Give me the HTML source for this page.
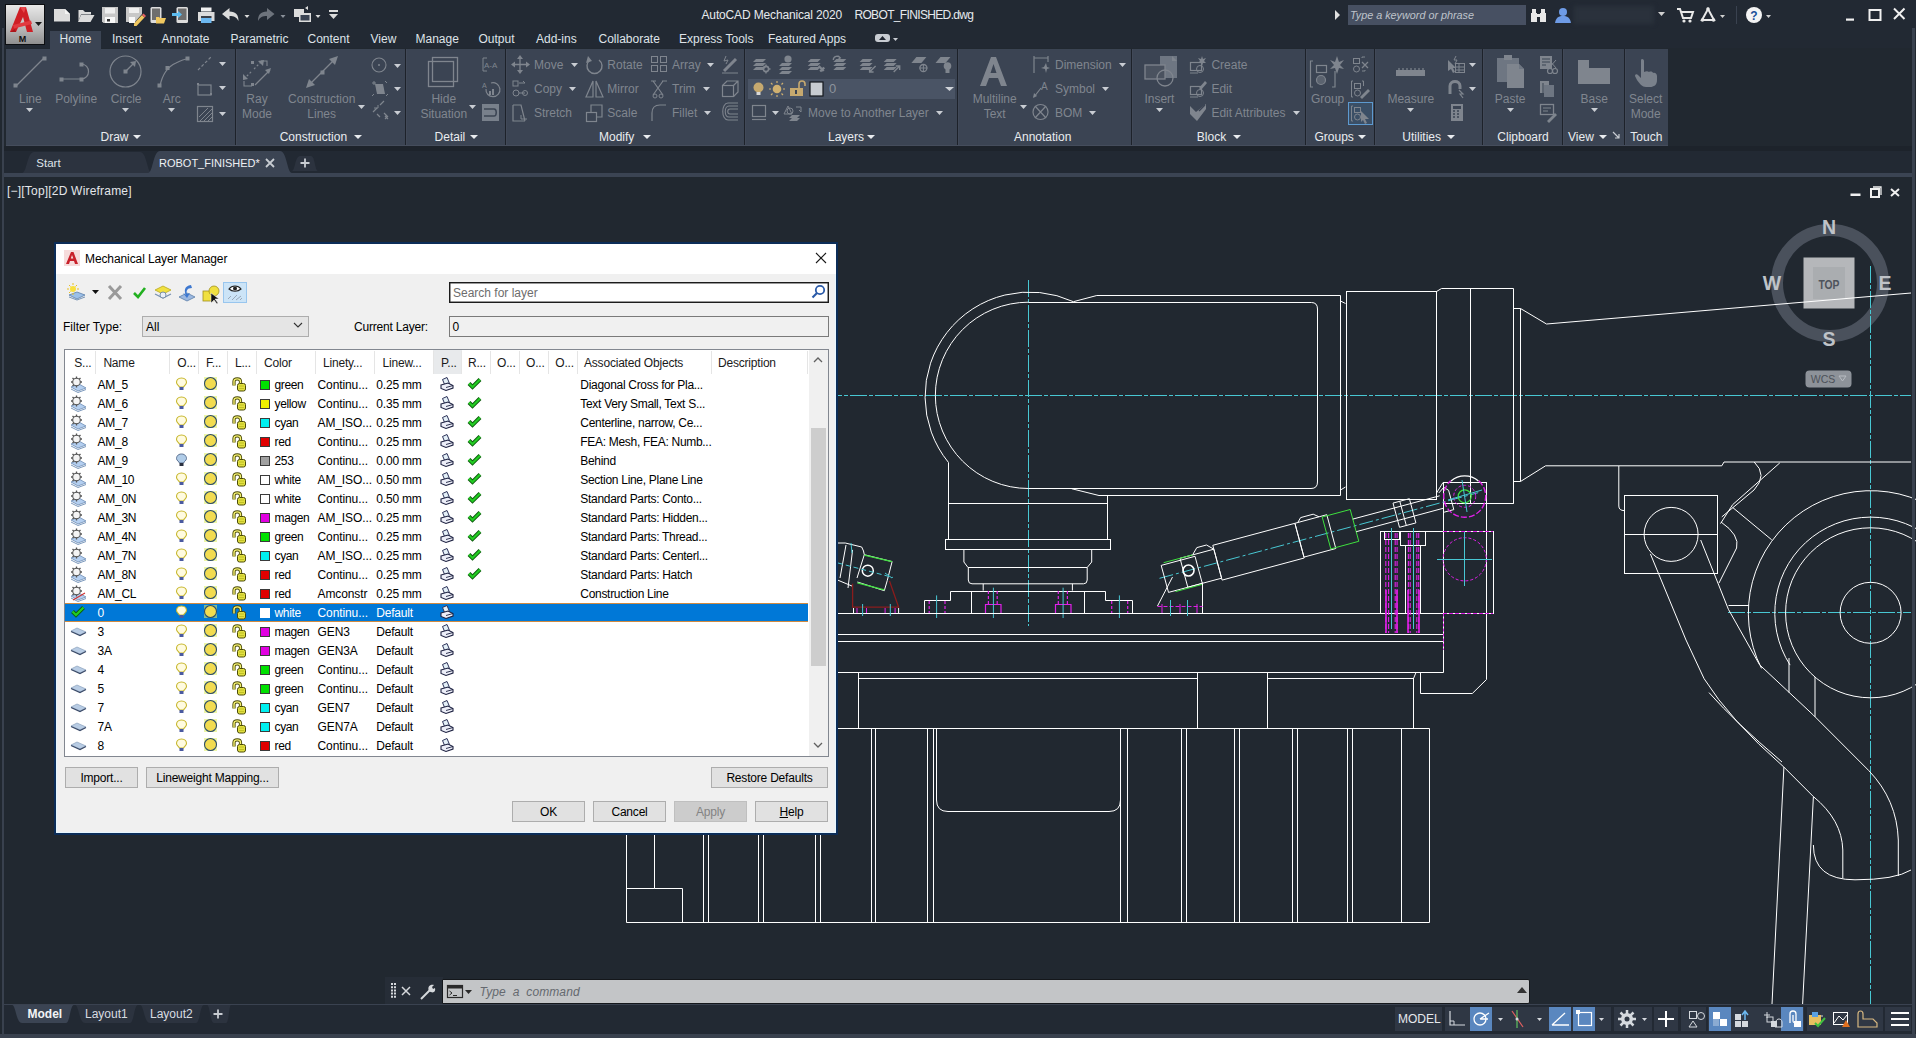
<!DOCTYPE html><html><head><meta charset="utf-8"><title>AutoCAD Mechanical 2020</title><style>
*{box-sizing:border-box;margin:0;padding:0}
html,body{width:1916px;height:1038px;overflow:hidden;background:#212830;font-family:"Liberation Sans",sans-serif;font-size:12px;color:#fff}
.a{position:absolute}
.t{position:absolute;white-space:pre;line-height:12px;height:12px}
.gl{color:#80868f}
.pl{color:#e9ecef}
.tab{color:#dfe3e8}
svg{position:absolute;overflow:visible}
.btn{position:absolute;background:#e1e1e1;border:1px solid #adadad;color:#000;text-align:center;font-size:12px;line-height:19px;padding-top:1px}
.cell{position:absolute;line-height:12px;white-space:pre;color:#000;font-size:12px}
</style></head><body>
<div class="a" style="left:0px;top:0px;width:1916px;height:48px;background:#222933;"></div>
<div class="a" style="left:2px;top:28px;width:2px;height:1010px;background:#39414e;"></div>
<div class="a" style="left:1912px;top:28px;width:3px;height:1010px;background:#39414e;"></div>
<div class="a" style="left:6px;top:49px;width:1662px;height:97px;background:#3b4453;"></div>
<div class="a" style="left:235px;top:49px;width:1px;height:97px;background:#1d222a;"></div>
<div class="a" style="left:236px;top:49px;width:1px;height:97px;background:#414958;"></div>
<div class="a" style="left:405px;top:49px;width:1px;height:97px;background:#1d222a;"></div>
<div class="a" style="left:406px;top:49px;width:1px;height:97px;background:#414958;"></div>
<div class="a" style="left:505px;top:49px;width:1px;height:97px;background:#1d222a;"></div>
<div class="a" style="left:506px;top:49px;width:1px;height:97px;background:#414958;"></div>
<div class="a" style="left:744px;top:49px;width:1px;height:97px;background:#1d222a;"></div>
<div class="a" style="left:745px;top:49px;width:1px;height:97px;background:#414958;"></div>
<div class="a" style="left:957px;top:49px;width:1px;height:97px;background:#1d222a;"></div>
<div class="a" style="left:958px;top:49px;width:1px;height:97px;background:#414958;"></div>
<div class="a" style="left:1131px;top:49px;width:1px;height:97px;background:#1d222a;"></div>
<div class="a" style="left:1132px;top:49px;width:1px;height:97px;background:#414958;"></div>
<div class="a" style="left:1305px;top:49px;width:1px;height:97px;background:#1d222a;"></div>
<div class="a" style="left:1306px;top:49px;width:1px;height:97px;background:#414958;"></div>
<div class="a" style="left:1374px;top:49px;width:1px;height:97px;background:#1d222a;"></div>
<div class="a" style="left:1375px;top:49px;width:1px;height:97px;background:#414958;"></div>
<div class="a" style="left:1482px;top:49px;width:1px;height:97px;background:#1d222a;"></div>
<div class="a" style="left:1483px;top:49px;width:1px;height:97px;background:#414958;"></div>
<div class="a" style="left:1562px;top:49px;width:1px;height:97px;background:#1d222a;"></div>
<div class="a" style="left:1563px;top:49px;width:1px;height:97px;background:#414958;"></div>
<div class="a" style="left:1624px;top:49px;width:1px;height:97px;background:#1d222a;"></div>
<div class="a" style="left:1625px;top:49px;width:1px;height:97px;background:#414958;"></div>
<div class="a" style="left:6px;top:145px;width:1662px;height:1px;background:#454d5c;"></div>
<div class="a" style="left:4px;top:146px;width:1908px;height:27px;background:#222933;"></div>
<div class="a" style="left:4px;top:146px;width:1908px;height:5px;background:#1d232b;"></div>
<div class="a" style="left:4px;top:173px;width:1908px;height:4px;background:#3b4453;"></div>
<div class="a" style="left:4px;top:177px;width:1908px;height:828px;background:#212830;"></div>
<div class="a" style="left:4px;top:1005px;width:1908px;height:33px;background:#222933;"></div>
<div class="a" style="left:4px;top:1004px;width:1908px;height:1px;background:#3a4250;"></div>
<div class="a" style="left:0px;top:1034px;width:1916px;height:4px;background:#39414e;"></div>
<div class="a" style="left:5px;top:4px;width:40px;height:41px;border:1px solid #0d0f12;background:linear-gradient(#e8e8e8,#b9b9b9 60%,#8f8f8f)"></div>
<svg style="left:6px;top:5px" width="38" height="40" viewBox="0 0 38 40"><path d="M4 27 L14 2 L20 2 L27 27 L21 27 L17 12 L10 27 Z" fill="#cf1f26"/><path d="M14 2 L20 2 L18 8 Z" fill="#e8474c"/><path d="M7 20 L25 15.5 L26 19 L8 23.5 Z" fill="#e23a40"/><path d="M4 27 L10 27 L9 24 Z" fill="#a8161b"/><path d="M29 17 H36 L32.5 21 Z" fill="#1a1a1a"/><text x="16.5" y="37" font-family="Liberation Sans" font-weight="bold" font-size="9" fill="#111" text-anchor="middle">M</text></svg>
<svg style="left:50px;top:4px" width="300" height="22" viewBox="0 0 300 22"><path d="M4 5 H15 L20 10 V17.5 H4 Z" fill="#dcdcdc"/><path d="M15 5 V10 H20" fill="#f4f4f4"/><path d="M28.5 6 H33 L35 8 H41 V10.5 H31 L28.5 17 Z" fill="#dcdcdc"/><path d="M31 11 H44.5 L40.5 18 H28 Z" fill="#dcdcdc"/><path d="M52 3 H68 V19 H53.5 L52 17.5 Z" fill="#c8c8c8"/><rect x="55" y="4" width="10" height="5.5" fill="#efefef"/><rect x="55" y="13" width="10" height="6" fill="#f8f8f8"/><rect x="57" y="15" width="3" height="2.5" fill="#333"/><path d="M76 3 H92 V10 L85 18 H76 Z" fill="#c8c8c8"/><rect x="79" y="4" width="10" height="5" fill="#efefef"/><rect x="79" y="13" width="6" height="6" fill="#f8f8f8"/><path d="M84 19.5 L92 11 L94.5 13.5 L86.5 22 L84 22 Z" fill="#f0c860"/><path d="M92 11 L93.5 9.5 L96 12 L94.5 13.5 Z" fill="#e86060"/><rect x="100.5" y="3" width="11" height="16" rx="1.5" fill="#dcdcdc"/><rect x="102" y="4.5" width="8" height="11.5" fill="#6e6e6e"/><path d="M106 13 H109 L110 14 H116 L114 19.5 H106 Z" fill="#f0c860"/><rect x="126.5" y="3" width="11.5" height="16" rx="1.5" fill="#dcdcdc"/><rect x="128" y="4.5" width="8.5" height="11.5" fill="#6e6e6e"/><path d="M122 9 H128 V7 L132 10.5 L128 14 V12 H122 Z" fill="#5bbcf0"/><path d="M151 3.5 H161.5 V7.5 H151 Z" fill="#f0f0f0"/><path d="M148 8 H164.5 V17 H148 Z" fill="#dcdcdc"/><rect x="151" y="14" width="10.5" height="5" fill="#6cb8f0"/><rect x="151" y="12" width="10.5" height="2" fill="#3a3f48"/><path d="M172 10 L179.5 4 V7.5 C186 7.5 188.5 11 188.5 17 C186.5 13 184 12 179.5 12 V16 Z" fill="#dcdcdc"/><path d="M194.5 11 H199.5 L197 14 Z" fill="#dcdcdc"/><path d="M224.5 10 L217 4 V7.5 C210.5 7.5 208 11 208 17 C210 13 212.5 12 217 12 V16 Z" fill="#6d737c"/><path d="M230.5 11 H235.5 L233 14 Z" fill="#8a9099"/><rect x="244" y="5" width="10" height="8" fill="#dcdcdc"/><rect x="249" y="9" width="12" height="9" fill="#dcdcdc"/><rect x="250.5" y="11" width="9" height="5.5" fill="#3b4453"/><path d="M255 4 L258 2 V6 Z" fill="#dcdcdc"/><path d="M265.5 11 H270.5 L268 14 Z" fill="#dcdcdc"/><rect x="279" y="6" width="9" height="2" fill="#dcdcdc"/><path d="M279 10 H288 L283.5 15 Z" fill="#dcdcdc"/></svg>
<div class="t " style="left:701.5px;top:8.5px;color:#e6e9ee;font-size:12px;letter-spacing:-0.15px">AutoCAD Mechanical 2020</div>
<div class="t " style="left:854.4px;top:8.5px;color:#e6e9ee;font-size:12px;letter-spacing:-0.65px">ROBOT_FINISHED.dwg</div>
<svg style="left:1334px;top:9px" width="8" height="12"><path d="M1 1 L6 6 L1 11 Z" fill="#e0e0e0"/></svg>
<div class="a" style="left:1348px;top:5px;width:178px;height:20px;background:#475062;"></div>
<div class="t " style="left:1350px;top:9px;font-style:italic;color:#bfc4cb;font-size:10.8px">Type a keyword or phrase</div>
<svg style="left:1530px;top:7px" width="18" height="16"><rect x="1" y="6" width="6" height="9" fill="#e8e8e8"/><rect x="10" y="6" width="6" height="9" fill="#e8e8e8"/><rect x="2" y="2" width="4" height="5" fill="#e8e8e8"/><rect x="11" y="2" width="4" height="5" fill="#e8e8e8"/><rect x="6" y="7" width="5" height="3" fill="#e8e8e8"/></svg>
<svg style="left:1554px;top:6px" width="18" height="18"><circle cx="9" cy="6" r="4" fill="#6e9be6"/><path d="M1 17 C2 11 5 10 9 10 C13 10 16 11 17 17 Z" fill="#6e9be6"/></svg>
<div class="a" style="left:1574px;top:6px;width:80px;height:18px;background:#2a313c;filter:blur(2px)"></div>
<svg style="left:1658px;top:12px" width="8" height="6"><path d="M0 0 H7 L3.5 4 Z" fill="#d0d0d0"/></svg>
<svg style="left:1676px;top:6px" width="18" height="18"><path d="M1 3 H4 L7 12 H15 L17 6 H5" fill="none" stroke="#e8e8e8" stroke-width="2"/><circle cx="8" cy="15" r="1.6" fill="#e8e8e8"/><circle cx="14" cy="15" r="1.6" fill="#e8e8e8"/></svg>
<svg style="left:1700px;top:6px" width="28" height="18"><path d="M8 3 L14 14 H2 Z" fill="none" stroke="#e8e8e8" stroke-width="2"/><circle cx="8" cy="3" r="1.8" fill="#e8e8e8"/><circle cx="2.5" cy="14" r="1.8" fill="#e8e8e8"/><circle cx="13.5" cy="14" r="1.8" fill="#e8e8e8"/><path d="M20 9 H25 L22.5 12 Z" fill="#d0d0d0"/></svg>
<div class="a" style="left:1736px;top:6px;width:1px;height:18px;background:#3a4250;"></div>
<svg style="left:1745px;top:6px" width="30" height="18"><circle cx="9" cy="9" r="8" fill="#f4f4f4"/><text x="9" y="13.5" font-family="Liberation Sans" font-weight="bold" font-size="12" fill="#1a4f9a" text-anchor="middle">?</text><path d="M21 9 H26 L23.5 12 Z" fill="#d0d0d0"/></svg>
<svg style="left:1840px;top:4px" width="70" height="20"><rect x="6" y="14.5" width="8" height="2.2" fill="#f0f0f0"/><rect x="29.5" y="6" width="11" height="10" fill="none" stroke="#f0f0f0" stroke-width="2"/><path d="M54 4.5 L64.5 15 M64.5 4.5 L54 15" stroke="#f0f0f0" stroke-width="2"/></svg>
<div class="a" style="left:50px;top:31px;width:51px;height:18px;background:#3b4453;"></div>
<div class="t tab" style="left:59.5px;top:33px;">Home</div>
<div class="t tab" style="left:112px;top:33px;">Insert</div>
<div class="t tab" style="left:161.5px;top:33px;">Annotate</div>
<div class="t tab" style="left:230.5px;top:33px;">Parametric</div>
<div class="t tab" style="left:307.5px;top:33px;">Content</div>
<div class="t tab" style="left:370.5px;top:33px;">View</div>
<div class="t tab" style="left:415.5px;top:33px;">Manage</div>
<div class="t tab" style="left:478.5px;top:33px;">Output</div>
<div class="t tab" style="left:536px;top:33px;">Add-ins</div>
<div class="t tab" style="left:598.5px;top:33px;">Collaborate</div>
<div class="t tab" style="left:679px;top:33px;">Express Tools</div>
<div class="t tab" style="left:768px;top:33px;">Featured Apps</div>
<svg style="left:874px;top:33px" width="26" height="12"><rect x="1" y="1" width="15" height="8" rx="3" fill="#c8ccd2"/><path d="M5 7 L8.5 3 L12 7 Z" fill="#1f2530"/><path d="M19 5 H24 L21.5 8 Z" fill="#c8ccd2"/></svg>
<div class="t pl" style="left:100.5px;top:131px;">Draw</div>
<svg style="left:133px;top:135px" width="8" height="5"><path d="M0 0 H8 L4 4 Z" fill="#e9ecef"/></svg>
<div class="t pl" style="left:279.7px;top:131px;">Construction</div>
<svg style="left:354px;top:135px" width="8" height="5"><path d="M0 0 H8 L4 4 Z" fill="#e9ecef"/></svg>
<div class="t pl" style="left:434.6px;top:131px;">Detail</div>
<svg style="left:469.7px;top:135px" width="8" height="5"><path d="M0 0 H8 L4 4 Z" fill="#e9ecef"/></svg>
<div class="t pl" style="left:599px;top:131px;">Modify</div>
<svg style="left:643px;top:135px" width="8" height="5"><path d="M0 0 H8 L4 4 Z" fill="#e9ecef"/></svg>
<div class="t pl" style="left:828px;top:131px;">Layers</div>
<svg style="left:867px;top:135px" width="8" height="5"><path d="M0 0 H8 L4 4 Z" fill="#e9ecef"/></svg>
<div class="t pl" style="left:1014px;top:131px;">Annotation</div>
<div class="t pl" style="left:1196.8px;top:131px;">Block</div>
<svg style="left:1232.5px;top:135px" width="8" height="5"><path d="M0 0 H8 L4 4 Z" fill="#e9ecef"/></svg>
<div class="t pl" style="left:1314.5px;top:131px;">Groups</div>
<svg style="left:1358px;top:135px" width="8" height="5"><path d="M0 0 H8 L4 4 Z" fill="#e9ecef"/></svg>
<div class="t pl" style="left:1402.3px;top:131px;">Utilities</div>
<svg style="left:1447px;top:135px" width="8" height="5"><path d="M0 0 H8 L4 4 Z" fill="#e9ecef"/></svg>
<div class="t pl" style="left:1497.3px;top:131px;">Clipboard</div>
<div class="t pl" style="left:1568px;top:131px;">View</div>
<svg style="left:1599px;top:135px" width="8" height="5"><path d="M0 0 H8 L4 4 Z" fill="#e9ecef"/></svg>
<div class="t pl" style="left:1630.3px;top:131px;">Touch</div>
<svg style="left:1612px;top:131px" width="9" height="9" viewBox="0 0 9 9"><path d="M1 1 L7 7 M7 3 V7 H3" stroke="#c9cdd3" stroke-width="1.2" fill="none"/></svg>
<div class="t gl" style="left:-69.7px;top:92.5px;width:200px;text-align:center;">Line</div>
<div class="t gl" style="left:-23.799999999999997px;top:92.5px;width:200px;text-align:center;">Polyline</div>
<div class="t gl" style="left:26.200000000000003px;top:92.5px;width:200px;text-align:center;">Circle</div>
<div class="t gl" style="left:71.80000000000001px;top:92.5px;width:200px;text-align:center;">Arc</div>
<div class="t gl" style="left:157.0px;top:92.5px;width:200px;text-align:center;">Ray</div>
<div class="t gl" style="left:157.0px;top:107.5px;width:200px;text-align:center;">Mode</div>
<div class="t gl" style="left:221.7px;top:92.5px;width:200px;text-align:center;">Construction</div>
<div class="t gl" style="left:221.7px;top:107.5px;width:200px;text-align:center;">Lines</div>
<div class="t gl" style="left:343.8px;top:92.5px;width:200px;text-align:center;">Hide</div>
<div class="t gl" style="left:343.8px;top:107.5px;width:200px;text-align:center;">Situation</div>
<div class="t gl" style="left:894.7px;top:92.5px;width:200px;text-align:center;">Multiline</div>
<div class="t gl" style="left:894.7px;top:107.5px;width:200px;text-align:center;">Text</div>
<div class="t gl" style="left:1059.4px;top:92.5px;width:200px;text-align:center;">Insert</div>
<div class="t gl" style="left:1227.6px;top:92.5px;width:200px;text-align:center;">Group</div>
<div class="t gl" style="left:1310.8px;top:92.5px;width:200px;text-align:center;">Measure</div>
<div class="t gl" style="left:1410.2px;top:92.5px;width:200px;text-align:center;">Paste</div>
<div class="t gl" style="left:1494.3px;top:92.5px;width:200px;text-align:center;">Base</div>
<div class="t gl" style="left:1545.7px;top:92.5px;width:200px;text-align:center;">Select</div>
<div class="t gl" style="left:1545.7px;top:107.5px;width:200px;text-align:center;">Mode</div>
<svg style="left:25.9px;top:108px" width="7.0" height="5"><path d="M0 0 H7.0 L3.5 4 Z" fill="#c9cdd3"/></svg>
<svg style="left:122.0px;top:108px" width="7.0" height="5"><path d="M0 0 H7.0 L3.5 4 Z" fill="#c9cdd3"/></svg>
<svg style="left:168.0px;top:108px" width="7.0" height="5"><path d="M0 0 H7.0 L3.5 4 Z" fill="#c9cdd3"/></svg>
<svg style="left:358.1px;top:105px" width="7.0" height="5"><path d="M0 0 H7.0 L3.5 4 Z" fill="#c9cdd3"/></svg>
<svg style="left:469.1px;top:105px" width="7.0" height="5"><path d="M0 0 H7.0 L3.5 4 Z" fill="#c9cdd3"/></svg>
<svg style="left:1019.9px;top:105px" width="7.0" height="5"><path d="M0 0 H7.0 L3.5 4 Z" fill="#c9cdd3"/></svg>
<svg style="left:1155.7px;top:108px" width="7.0" height="5"><path d="M0 0 H7.0 L3.5 4 Z" fill="#c9cdd3"/></svg>
<svg style="left:1407.0px;top:108px" width="7.0" height="5"><path d="M0 0 H7.0 L3.5 4 Z" fill="#c9cdd3"/></svg>
<svg style="left:1507.2px;top:108px" width="7.0" height="5"><path d="M0 0 H7.0 L3.5 4 Z" fill="#c9cdd3"/></svg>
<svg style="left:1591.3px;top:108px" width="7.0" height="5"><path d="M0 0 H7.0 L3.5 4 Z" fill="#c9cdd3"/></svg>
<svg style="left:219.0px;top:62px" width="7.0" height="5"><path d="M0 0 H7.0 L3.5 4 Z" fill="#c9cdd3"/></svg>
<svg style="left:219.0px;top:86px" width="7.0" height="5"><path d="M0 0 H7.0 L3.5 4 Z" fill="#c9cdd3"/></svg>
<svg style="left:219.0px;top:112px" width="7.0" height="5"><path d="M0 0 H7.0 L3.5 4 Z" fill="#c9cdd3"/></svg>
<svg style="left:393.9px;top:63.5px" width="7.0" height="5"><path d="M0 0 H7.0 L3.5 4 Z" fill="#c9cdd3"/></svg>
<svg style="left:393.9px;top:87px" width="7.0" height="5"><path d="M0 0 H7.0 L3.5 4 Z" fill="#c9cdd3"/></svg>
<svg style="left:393.9px;top:111px" width="7.0" height="5"><path d="M0 0 H7.0 L3.5 4 Z" fill="#c9cdd3"/></svg>
<svg style="left:570.8px;top:63px" width="7.0" height="5"><path d="M0 0 H7.0 L3.5 4 Z" fill="#c9cdd3"/></svg>
<svg style="left:568.8px;top:87px" width="7.0" height="5"><path d="M0 0 H7.0 L3.5 4 Z" fill="#c9cdd3"/></svg>
<svg style="left:706.9px;top:63px" width="7.0" height="5"><path d="M0 0 H7.0 L3.5 4 Z" fill="#c9cdd3"/></svg>
<svg style="left:703.1px;top:87px" width="7.0" height="5"><path d="M0 0 H7.0 L3.5 4 Z" fill="#c9cdd3"/></svg>
<svg style="left:703.8px;top:111px" width="7.0" height="5"><path d="M0 0 H7.0 L3.5 4 Z" fill="#c9cdd3"/></svg>
<svg style="left:771.5px;top:111px" width="7.0" height="5"><path d="M0 0 H7.0 L3.5 4 Z" fill="#c9cdd3"/></svg>
<svg style="left:935.5px;top:111px" width="7.0" height="5"><path d="M0 0 H7.0 L3.5 4 Z" fill="#c9cdd3"/></svg>
<svg style="left:1119.1px;top:63px" width="7.0" height="5"><path d="M0 0 H7.0 L3.5 4 Z" fill="#c9cdd3"/></svg>
<svg style="left:1101.7px;top:87px" width="7.0" height="5"><path d="M0 0 H7.0 L3.5 4 Z" fill="#c9cdd3"/></svg>
<svg style="left:1089.0px;top:111px" width="7.0" height="5"><path d="M0 0 H7.0 L3.5 4 Z" fill="#c9cdd3"/></svg>
<svg style="left:1293.0px;top:111px" width="7.0" height="5"><path d="M0 0 H7.0 L3.5 4 Z" fill="#c9cdd3"/></svg>
<svg style="left:1469.2px;top:63px" width="7.0" height="5"><path d="M0 0 H7.0 L3.5 4 Z" fill="#c9cdd3"/></svg>
<svg style="left:1469.2px;top:87px" width="7.0" height="5"><path d="M0 0 H7.0 L3.5 4 Z" fill="#c9cdd3"/></svg>
<div class="t gl" style="left:534px;top:58.5px;">Move</div>
<div class="t gl" style="left:607.3px;top:58.5px;">Rotate</div>
<div class="t gl" style="left:672px;top:58.5px;">Array</div>
<div class="t gl" style="left:534px;top:82.5px;">Copy</div>
<div class="t gl" style="left:607.3px;top:82.5px;">Mirror</div>
<div class="t gl" style="left:672px;top:82.5px;">Trim</div>
<div class="t gl" style="left:534px;top:106.5px;">Stretch</div>
<div class="t gl" style="left:607.3px;top:106.5px;">Scale</div>
<div class="t gl" style="left:672px;top:106.5px;">Fillet</div>
<div class="t gl" style="left:808px;top:106.5px;">Move to Another Layer</div>
<div class="t gl" style="left:1055px;top:58.5px;">Dimension</div>
<div class="t gl" style="left:1055px;top:82.5px;">Symbol</div>
<div class="t gl" style="left:1055px;top:106.5px;">BOM</div>
<div class="t gl" style="left:1211.4px;top:58.5px;">Create</div>
<div class="t gl" style="left:1211.4px;top:82.5px;">Edit</div>
<div class="t gl" style="left:1211.4px;top:106.5px;">Edit Attributes</div>
<svg style="left:12px;top:54px" width="36" height="36" viewBox="0 0 36 36"><path d="M4 32 L32 4" stroke="#7f858e" stroke-width="1.2"/><rect x="1.5" y="29.5" width="4" height="4" fill="#7f858e"/><rect x="30.5" y="2.5" width="4" height="4" fill="#7f858e"/></svg>
<svg style="left:58px;top:60px" width="40" height="24" viewBox="0 0 40 24"><path d="M3 19 H23 M23 4 C33 4 33 19 23 19" stroke="#7f858e" stroke-width="1.2" fill="none"/><rect x="1.5" y="17.5" width="4" height="4" fill="#7f858e"/><rect x="21.5" y="17.5" width="4" height="4" fill="#7f858e"/><rect x="21.5" y="2.5" width="4" height="4" fill="#7f858e"/></svg>
<svg style="left:108px;top:54px" width="36" height="36" viewBox="0 0 36 36"><circle cx="17.5" cy="17.5" r="15.5" stroke="#7f858e" stroke-width="1.2" fill="none"/><rect x="15.5" y="15.5" width="4" height="4" fill="#7f858e"/><path d="M18 17 L26 9" stroke="#7f858e" stroke-width="1.2"/><path d="M28 7 L22 8 L27 13 Z" fill="#7f858e"/></svg>
<svg style="left:156px;top:54px" width="36" height="36" viewBox="0 0 36 36"><path d="M4 32 C6 22 11 13 20 9 C24 7 28 5 31 5" stroke="#7f858e" stroke-width="1.2" fill="none"/><rect x="1.5" y="29.5" width="4" height="4" fill="#7f858e"/><rect x="29.5" y="2.5" width="4" height="4" fill="#7f858e"/><rect x="9.5" y="12" width="4" height="4" fill="#7f858e"/></svg>
<svg style="left:196px;top:55px" width="18" height="70" viewBox="0 0 18 70"><path d="M2 15 L16 1" stroke="#7f858e" stroke-width="1.2" stroke-dasharray="3 2"/><rect x="2" y="30" width="13" height="10" stroke="#7f858e" stroke-width="1.2" fill="none"/><rect x="14" y="38" width="2" height="2" fill="#7f858e"/><rect x="1" y="28" width="2" height="2" fill="#7f858e"/><rect x="1.5" y="51.5" width="15" height="15" stroke="#7f858e" stroke-width="1.2" fill="none"/><path d="M3 62 L12 53 M4 66 L16 54 M8 66 L16 58 M12 66 L16 62" stroke="#7f858e" stroke-width="1"/></svg>
<svg style="left:241px;top:57px" width="32" height="32" viewBox="0 0 32 32"><path d="M3 22 L11 14 M13 12 L21 4" stroke="#7f858e" stroke-width="1.2" stroke-dasharray="2 2"/><path d="M2 23 L2 17 L7 22 Z" fill="#7f858e"/><path d="M23 3 L17 4 L22 9 Z" fill="#7f858e"/><path d="M14 28 L29 13" stroke="#7f858e" stroke-width="1.2"/><path d="M30 11 L24 13 L28 17 Z" fill="#7f858e"/><rect x="10" y="4" width="3" height="3" fill="#7f858e"/><rect x="10" y="26" width="3" height="3" fill="#7f858e"/><path d="M3 24 V29 H11 M20 4 H26 V9" stroke="#7f858e" stroke-width="1.1" fill="none"/></svg>
<svg style="left:305px;top:55px" width="34" height="34" viewBox="0 0 34 34"><path d="M5 29 L29 5" stroke="#7f858e" stroke-width="1.2"/><path d="M1 33 L4 24 L10 30 Z" fill="#7f858e"/><path d="M33 1 L24 4 L30 10 Z" fill="#7f858e"/><rect x="15.5" y="15.5" width="4" height="4" fill="#7f858e"/></svg>
<svg style="left:371px;top:56px" width="18" height="68" viewBox="0 0 18 68"><circle cx="8" cy="9" r="7" stroke="#7f858e" stroke-width="1.1" fill="none"/><circle cx="8" cy="9" r="1" fill="#7f858e"/><path d="M4 28 L12 28 L14 38 L6 38 Z" fill="#7f858e"/><path d="M1 27 H5 M3 25 V29" stroke="#7f858e"/><path d="M1 40 L3 38 M14 25 L16 27 M15 40 L17 38" stroke="#7f858e"/><path d="M2 56 L6 52 M9 49 L13 45 M6 58 L9 61 M13 57 L16 60 M14 60 L17 63 M17 60 L14 63" stroke="#7f858e" stroke-width="1.2"/><path d="M3 52 H7 V49" stroke="#7f858e" fill="none"/></svg>
<svg style="left:427px;top:56px" width="33" height="33" viewBox="0 0 33 33"><rect x="5.5" y="1.5" width="25" height="24" stroke="#7f858e" stroke-width="1.3" fill="none"/><rect x="1.5" y="5.5" width="25" height="25" stroke="#7f858e" stroke-width="1.3" fill="none"/></svg>
<svg style="left:481px;top:56px" width="20" height="68" viewBox="0 0 20 68"><path d="M2 2 V15 M2 2 H6 M2 15 H6" stroke="#7f858e"/><text x="3" y="12" font-family="Liberation Sans" font-size="8" fill="#7f858e">A-A</text><text x="1" y="32" font-family="Liberation Sans" font-size="7" fill="#7f858e">A</text><path d="M5 33 A7 7 0 1 0 10 27" stroke="#7f858e" stroke-width="1.2" fill="none"/><rect x="8" y="35" width="2" height="4" fill="#7f858e"/><rect x="11" y="33" width="2" height="6" fill="#7f858e"/><rect x="1" y="48" width="17" height="17" fill="#78808b"/><path d="M3 53 H13 C16 53 16 60 13 60 H3" stroke="#3b4453" stroke-width="1.5" fill="none"/></svg>
<svg style="left:511px;top:55px" width="20" height="68" viewBox="0 0 20 68"><path d="M9 2 V17 M2 9.5 H17" stroke="#7f858e" stroke-width="1.3"/><path d="M9 0 L6 4 H12 Z M9 19 L6 15 H12 Z M0 9.5 L4 6.5 V12.5 Z M19 9.5 L15 6.5 V12.5 Z" fill="#7f858e"/><rect x="2" y="26" width="5" height="5" stroke="#7f858e" fill="none"/><circle cx="5" cy="38" r="3" stroke="#7f858e" fill="none"/><path d="M8 28 H14 L12 26 M8 38 H14" stroke="#7f858e" fill="none"/><circle cx="14" cy="38" r="2.5" stroke="#7f858e" fill="none"/><path d="M2 50 V66 H14 M2 50 H10 L14 66" stroke="#7f858e" stroke-width="1.2" fill="none"/><path d="M10 60 V64 H16" stroke="#7f858e" fill="none"/></svg>
<svg style="left:585px;top:55px" width="20" height="68" viewBox="0 0 20 68"><path d="M14 5 A7.5 7.5 0 1 1 5 5" stroke="#7f858e" stroke-width="1.4" fill="none"/><path d="M3 1 L7 6 L1 8 Z" fill="#7f858e"/><path d="M8 26 V42 H1 Z M11 26 V42 H18 Z" stroke="#7f858e" stroke-width="1.2" fill="none"/><rect x="1.5" y="57.5" width="10" height="9" stroke="#7f858e" stroke-width="1.2" fill="none"/><path d="M6 57 V50 H17 V62 H11" stroke="#7f858e" stroke-width="1.2" fill="none"/></svg>
<svg style="left:650px;top:55px" width="20" height="68" viewBox="0 0 20 68"><rect x="1.5" y="1.5" width="6" height="6" stroke="#7f858e" fill="none"/><rect x="10.5" y="1.5" width="6" height="6" stroke="#7f858e" fill="none"/><rect x="1.5" y="10.5" width="6" height="6" stroke="#7f858e" fill="none"/><rect x="10.5" y="10.5" width="6" height="6" stroke="#7f858e" fill="none"/><path d="M3 26 L13 40 M13 26 L3 40 M1 26 H6 M12 26 H17" stroke="#7f858e" stroke-width="1.2"/><circle cx="5" cy="41" r="2" stroke="#7f858e" fill="none"/><circle cx="11" cy="41" r="2" stroke="#7f858e" fill="none"/><path d="M2 66 V58 C2 53 5 50 10 50 H16" stroke="#7f858e" stroke-width="1.2" fill="none"/></svg>
<svg style="left:721px;top:55px" width="20" height="68" viewBox="0 0 20 68"><path d="M3 16 L15 4" stroke="#7f858e" stroke-width="3"/><path d="M1 18 H17" stroke="#7f858e"/><path d="M5 1 L3 6 L7 5 L5 9" stroke="#7f858e" fill="none"/><rect x="1.5" y="30.5" width="11" height="11" stroke="#7f858e" stroke-width="1.2" fill="none"/><path d="M1.5 30.5 L6 26 H17 V37 L12.5 41.5 M12.5 30.5 L17 26" stroke="#7f858e" stroke-width="1.2" fill="none"/><path d="M17 51 H8 C3 51 3 62 8 62 H17 M17 54 H9 C6 54 6 59 9 59 H17 M17 65 H7 C0 65 0 48 7 48 H17" stroke="#7f858e" stroke-width="1.1" fill="none"/></svg>
<svg style="left:747px;top:55px" width="210" height="22" viewBox="0 0 210 22"><g transform="translate(5,0)"><path d="M1 7 L4 4 H14 L11 7 Z" fill="#7f858e"/><path d="M1 11 L4 8 H14 L11 11 Z" fill="#7f858e"/><path d="M1 15 L4 12 H14 L11 15 Z" fill="#7f858e"/><circle cx="14" cy="14" r="2.6" stroke="#7f858e" stroke-width="1.6" fill="none"/><path d="M14 9.5 V11 M14 17 V18.5 M9.5 14 H11 M17 14 H18.5" stroke="#7f858e" stroke-width="1.4"/></g><g transform="translate(31,0)"><path d="M1 11 L4 8 H14 L11 11 Z" fill="#7f858e"/><path d="M1 15 L4 12 H14 L11 15 Z" fill="#7f858e"/><path d="M1 19 L4 16 H14 L11 19 Z" fill="#7f858e"/><circle cx="10" cy="4" r="3.6" fill="#7f858e"/></g><g transform="translate(59.700000000000045,0)"><path d="M1 7 L4 4 H14 L11 7 Z" fill="#7f858e"/><path d="M1 11 L4 8 H14 L11 11 Z" fill="#7f858e"/><path d="M1 15 L4 12 H14 L11 15 Z" fill="#7f858e"/><path d="M12 11 L17 16 M13.5 16.5 L17.5 12.5" stroke="#7f858e" stroke-width="2.4"/></g><g transform="translate(85.29999999999995,0)"><path d="M1 7 L4 4 H14 L11 7 Z" fill="#7f858e"/><path d="M1 11 L4 8 H14 L11 11 Z" fill="#7f858e"/><path d="M1 15 L4 12 H14 L11 15 Z" fill="#7f858e"/><path d="M1 5 C1 1 6 0 8 3 M6 1 L8 3 L5 5" stroke="#7f858e" stroke-width="1.3" fill="none"/></g><g transform="translate(111.60000000000002,0)"><path d="M1 7 L4 4 H14 L11 7 Z" fill="#7f858e"/><path d="M1 11 L4 8 H14 L11 11 Z" fill="#7f858e"/><path d="M1 15 L4 12 H14 L11 15 Z" fill="#7f858e"/><path d="M11 17 L17 11 M11 13 V17 H15" stroke="#7f858e" stroke-width="1.4" fill="none"/></g><g transform="translate(135.70000000000005,0)"><path d="M1 7 L4 4 H14 L11 7 Z" fill="#7f858e"/><path d="M1 11 L4 8 H14 L11 11 Z" fill="#7f858e"/><path d="M1 15 L4 12 H14 L11 15 Z" fill="#7f858e"/><path d="M11 17 L17 11 M13 11 H17 V15" stroke="#7f858e" stroke-width="1.4" fill="none"/></g><g transform="translate(163.39999999999998,0)"><path d="M1 8 L6 2 H16 L11 8 Z" fill="#7f858e"/><circle cx="13" cy="13" r="3.5" stroke="#7f858e" stroke-width="1.3" fill="none"/><path d="M13 9 V17 M9 13 H17" stroke="#7f858e" stroke-width="1"/></g><g transform="translate(187.5,0)"><path d="M1 8 L6 2 H16 L11 8 Z" fill="#7f858e"/><circle cx="13" cy="11" r="3.8" fill="#7f858e"/><rect x="11" y="14" width="4" height="4" fill="#7f858e"/></g></svg>
<div class="a" style="left:747.5px;top:79px;width:207px;height:20px;background:#4a5465;"></div>
<svg style="left:750px;top:80px" width="90" height="18" viewBox="0 0 90 18"><circle cx="8.5" cy="7.5" r="5" fill="#c6a96f"/><rect x="6.5" y="12" width="4" height="3" fill="#d8d8d8"/><circle cx="27" cy="9" r="4.3" fill="#d0b070"/><path d="M27 1 V3 M27 15 V17 M19 9 H21 M33 9 H35 M21 3 L22.5 4.5 M33 3 L31.5 4.5 M21 15 L22.5 13.5 M33 15 L31.5 13.5" stroke="#d0b070" stroke-width="1.2"/><rect x="40" y="8" width="13" height="8" fill="#c6a96f"/><path d="M49 8 V4 C49 0 55 0 55 4 V6" stroke="#c6a96f" stroke-width="1.6" fill="none"/><rect x="45" y="10" width="2" height="4" fill="#3b4453"/><rect x="60" y="2" width="13" height="14" fill="#c8ccd1" stroke="#15181d" stroke-width="1.2"/></svg>
<div class="t " style="left:829px;top:83px;color:#8d939c;font-size:13px">0</div>
<svg style="left:944.5px;top:87px" width="9.0" height="5"><path d="M0 0 H9.0 L4.5 4 Z" fill="#d0d4da"/></svg>
<svg style="left:751px;top:104px" width="54" height="18" viewBox="0 0 54 18"><rect x="1.5" y="1.5" width="13" height="11" stroke="#7f858e" stroke-width="1.2" fill="none"/><path d="M1 15.5 H15" stroke="#7f858e" stroke-width="1.2"/><path d="M37 2 L33 10 H41 Z" stroke="#7f858e" fill="none"/><circle cx="39" cy="7" r="3" stroke="#7f858e" fill="none"/><path d="M38 14 L41 11 H49 L46 14 Z M38 17 L41 14 H49 L46 17 Z" fill="#7f858e"/><path d="M45 3 H50 V8 L48 6" stroke="#7f858e" fill="none"/></svg>
<svg style="left:979px;top:56px" width="30" height="31" viewBox="0 0 30 31"><path d="M1 30 L12 1 H17 L28 30 H22 L19 22 H10 L7 30 Z M11.5 17 H17.5 L14.5 8 Z" fill="#7f858e"/></svg>
<svg style="left:1032px;top:55px" width="20" height="68" viewBox="0 0 20 68"><path d="M2 1 V18 M16 1 V7 M2 3 H16" stroke="#7f858e" stroke-width="1.2"/><path d="M12 12 L14 8 L15 12 L18 13 L15 14 L14 18 L13 14 L9 13 Z" fill="#7f858e"/><path d="M2 42 L9 33" stroke="#7f858e" stroke-width="1.2"/><path d="M1 43 L2 38 L5 41 Z" fill="#7f858e"/><text x="9" y="35" font-family="Liberation Sans" font-size="10" fill="#7f858e">A</text><circle cx="8.5" cy="57" r="7.5" stroke="#7f858e" stroke-width="1.2" fill="none"/><path d="M3 51 L14 63 M14 51 L3 63" stroke="#7f858e" stroke-width="1.2"/></svg>
<svg style="left:1143px;top:55px" width="36" height="34" viewBox="0 0 36 34"><rect x="17" y="1" width="17" height="22" fill="#6e7682"/><path d="M29 1 L34 6 H29 Z" fill="#7f858e"/><rect x="2" y="10" width="20" height="14" stroke="#7f858e" stroke-width="1.3" fill="#4a525f"/><circle cx="22" cy="23" r="8" stroke="#7f858e" stroke-width="1.3" fill="none"/></svg>
<svg style="left:1189px;top:55px" width="20" height="68" viewBox="0 0 20 68"><rect x="1.5" y="7.5" width="11" height="8" stroke="#7f858e" stroke-width="1.2" fill="none"/><circle cx="11" cy="14" r="3.5" stroke="#7f858e" fill="none"/><path d="M13 1 L14 4 L17 3 L15 6 L17 8 L14 8 L13 11 L12 8 L9 8 L11 6 L9 3 L12 4 Z" fill="#7f858e"/><path d="M1 18 H9" stroke="#7f858e"/><rect x="1.5" y="31.5" width="11" height="8" stroke="#7f858e" stroke-width="1.2" fill="none"/><circle cx="11" cy="38" r="3.5" stroke="#7f858e" fill="none"/><path d="M10 33 L16 26 L18 28 L12 35 Z" fill="#7f858e"/><path d="M1 42 H9" stroke="#7f858e"/><path d="M1 51 L7 57 L17 49 L17 54 L8 66 L1 59 Z" fill="#7f858e"/><path d="M10 56 L16 50" stroke="#3b4453" stroke-width="1.2"/></svg>
<svg style="left:1309px;top:55px" width="36" height="34" viewBox="0 0 36 34"><path d="M4 6 H1.5 V32 H4 M26 16 V32 H23" stroke="#7f858e" stroke-width="1.2" fill="none"/><rect x="7.5" y="10.5" width="10" height="7" stroke="#7f858e" stroke-width="1.2" fill="none"/><circle cx="12" cy="25" r="4.5" stroke="#7f858e" stroke-width="1.2" fill="#5b636f"/><path d="M28 1 L30 7 L35 5 L31 10 L35 14 L30 13 L28 19 L26 13 L21 14 L25 10 L21 5 L26 7 Z" fill="#7f858e"/></svg>
<svg style="left:1350px;top:55px" width="22" height="46" viewBox="0 0 22 46"><rect x="3.5" y="3.5" width="6" height="5" stroke="#7f858e" fill="none"/><circle cx="6.5" cy="14" r="3" stroke="#7f858e" fill="none"/><path d="M12 3 V2 H15 M12 16 H15 V15" stroke="#7f858e" fill="none"/><path d="M12 7 L18 13 M18 7 L12 13" stroke="#7f858e" stroke-width="1.3"/><path d="M3 26 H1.5 V42 H3 M12 26 H13.5 V31" stroke="#7f858e" fill="none"/><rect x="4.5" y="28.5" width="6" height="5" stroke="#7f858e" fill="none"/><circle cx="7.5" cy="38" r="3" stroke="#7f858e" fill="none"/><path d="M10 42 L18 34 L20 36 L12 44 Z" fill="#7f858e"/></svg>
<div class="a" style="left:1347.5px;top:102px;width:25px;height:23px;background:#3b4f66;border:1px solid #5d9ad0"></div>
<svg style="left:1350px;top:104px" width="22" height="20" viewBox="0 0 22 20"><path d="M3 2 H1.5 V17 H3" stroke="#7f858e" fill="none"/><rect x="4.5" y="3.5" width="6" height="5" stroke="#7f858e" fill="none"/><circle cx="7.5" cy="13" r="3" stroke="#7f858e" fill="none"/><path d="M11 7 L19 15 L15 15 L17 19 L15 20 L13 16 L11 18 Z" fill="#7f858e"/></svg>
<svg style="left:1396px;top:67px" width="30" height="9" viewBox="0 0 30 9"><rect x="0" y="3" width="29" height="6" fill="#7f858e"/><path d="M3 3 V1 M7 3 V1 M11 3 V1 M15 3 V1 M19 3 V1 M23 3 V1 M27 3 V1" stroke="#7f858e" stroke-width="1.2"/></svg>
<svg style="left:1447px;top:56px" width="20" height="68" viewBox="0 0 20 68"><path d="M1 4 L9 12 L6 12 L8 16 L6 17 L4 13 L1 15 Z" fill="#7f858e"/><rect x="8.5" y="7.5" width="9" height="9" stroke="#7f858e" fill="none"/><path d="M8.5 11 H17.5 M8.5 14 H17.5 M12 7.5 V16.5" stroke="#7f858e"/><path d="M9 0 L7 4 L10 4 L8 8" stroke="#7f858e" fill="none"/><path d="M3 38 V30 C3 24 13 24 13 30 V33" stroke="#7f858e" stroke-width="3" fill="none"/><path d="M12 34 L16 38 L13 38 L16 42" stroke="#7f858e" stroke-width="1.2" fill="none"/><rect x="4" y="48" width="12" height="17" fill="#7f858e"/><rect x="6" y="50" width="8" height="3" fill="#3b4453"/><path d="M6 55 H8 M10 55 H12 M6 58 H8 M10 58 H12 M6 61 H8 M10 61 H12" stroke="#3b4453" stroke-width="1.5"/></svg>
<svg style="left:1495px;top:54px" width="30" height="36" viewBox="0 0 30 36"><rect x="2" y="4" width="22" height="24" fill="#6e7682"/><rect x="9" y="1" width="8" height="5" fill="#7f858e"/><path d="M12 10 H24 L29 15 V34 H12 Z" fill="#7f858e"/><path d="M24 10 V15 H29" fill="#6e7682"/></svg>
<svg style="left:1538px;top:55px" width="22" height="68" viewBox="0 0 22 68"><rect x="2" y="1" width="12" height="13" fill="#7f858e"/><path d="M4 4 H12 M4 7 H12 M4 10 H8" stroke="#3b4453"/><circle cx="12" cy="16" r="2.5" stroke="#7f858e" stroke-width="1.2" fill="none"/><circle cx="17" cy="16" r="2.5" stroke="#7f858e" stroke-width="1.2" fill="none"/><path d="M11 13 L18 5 M18 13 L12 6" stroke="#7f858e"/><rect x="2" y="26" width="9" height="12" fill="#7f858e"/><rect x="6" y="30" width="10" height="12" fill="#6e7682"/><path d="M5 28 V39" stroke="#3b4453"/><rect x="2.5" y="49.5" width="13" height="10" stroke="#7f858e" stroke-width="1.3" fill="none"/><path d="M5 53 H13 M5 56 H10" stroke="#7f858e"/><path d="M9 66 L17 58 L19 60 L11 68 Z" fill="#7f858e"/></svg>
<svg style="left:1577px;top:59px" width="34" height="26" viewBox="0 0 34 26"><path d="M1 1 H12 V9 H33 V25 H1 Z" fill="#7f858e"/></svg>
<svg style="left:1634px;top:58px" width="24" height="30" viewBox="0 0 24 30"><path d="M8 1 C9.5 1 10 2 10 3 V14 C12 13 14 13 15 14 C17 13 19 14 19 15 C21 14 23 16 23 18 V22 C23 27 20 29 16 29 H12 C8 29 6 26 3 22 L1 18 C1 16 3 16 4 17 L7 20 V3 C7 2 7 1 8 1 Z" fill="#7a818b"/></svg>
<svg style="left:0px;top:146px" width="340" height="32"><path d="M22 27 C27 27 27 6 34 6 H140 C147 6 147 27 152 27 Z" fill="#2c333f"/><path d="M148 27 C153 27 153 5 160 5 H280 C287 5 287 27 292 27 Z" fill="#3b4453"/><path d="M292 25 C295 25 295 10 300 10 H311 C315 10 315 25 318 25 Z" fill="#2c333f"/></svg>
<div class="t " style="left:36.3px;top:157px;color:#dfe3e8;font-size:11.5px">Start</div>
<div class="t " style="left:159px;top:157px;color:#eef0f3;font-size:11px">ROBOT_FINISHED*</div>
<svg style="left:265px;top:158px" width="10" height="10" viewBox="0 0 10 10"><path d="M1 1 L9 9 M9 1 L1 9" stroke="#c8ccd2" stroke-width="1.8"/></svg>
<svg style="left:300px;top:158px" width="10" height="10" viewBox="0 0 10 10"><path d="M5 0.5 V9.5 M0.5 5 H9.5" stroke="#c8ccd2" stroke-width="1.8"/></svg>
<div class="a" style="left:1912px;top:177px;width:3px;height:828px;background:#39414e;"></div>
<div class="t " style="left:7px;top:185px;color:#e3e6ea;letter-spacing:0.2px">[−][Top][2D Wireframe]</div>
<svg style="left:1848px;top:184px" width="56" height="16" viewBox="0 0 56 16"><rect x="2.5" y="9.5" width="10" height="2.5" fill="#f0f0f0"/><rect x="23" y="5" width="8" height="8" fill="none" stroke="#f0f0f0" stroke-width="2"/><path d="M25 3 H33 V11" fill="none" stroke="#f0f0f0" stroke-width="1.3"/><path d="M43 5 L51 12 M51 5 L43 12" stroke="#f0f0f0" stroke-width="2"/></svg>
<svg style="left:1760px;top:212px" width="140" height="180" viewBox="0 0 140 180"><circle cx="70" cy="71" r="53" fill="none" stroke="#4a515c" stroke-width="12"/><rect x="43.5" y="45.5" width="51" height="51" fill="#b5b7ba"/><rect x="53" y="55" width="32" height="32" fill="#aaadb0"/><text x="69" y="76.5" font-family="Liberation Sans" font-weight="bold" font-size="13.5" fill="#4f545c" text-anchor="middle" textLength="21" lengthAdjust="spacingAndGlyphs">TOP</text><text x="69" y="22" font-family="Liberation Sans" font-weight="bold" font-size="19.5" fill="#bfc3c8" text-anchor="middle">N</text><text x="69" y="134" font-family="Liberation Sans" font-weight="bold" font-size="19.5" fill="#bfc3c8" text-anchor="middle">S</text><text x="12" y="78" font-family="Liberation Sans" font-weight="bold" font-size="19.5" fill="#bfc3c8" text-anchor="middle">W</text><text x="125" y="78" font-family="Liberation Sans" font-weight="bold" font-size="19.5" fill="#bfc3c8" text-anchor="middle">E</text><rect x="45.5" y="158.5" width="46" height="17" rx="4" fill="#8d9299"/><text x="63" y="171" font-family="Liberation Sans" font-size="10.5" fill="#4c5158" text-anchor="middle">WCS</text><path d="M79 164 H86 L82.5 169 Z" fill="none" stroke="#b8bcc2"/></svg>
<svg style="left:0;top:0" width="1916" height="1038" viewBox="0 0 1916 1038"><line x1="600" y1="395.5" x2="1911" y2="395.5" stroke="#48c8d3" stroke-dasharray="17 2 4 2"/><line x1="1028.5" y1="280" x2="1028.5" y2="626" stroke="#48c8d3" stroke-dasharray="17 2 4 2"/><line x1="1870.5" y1="266" x2="1870.5" y2="1004" stroke="#48c8d3" stroke-dasharray="17 2 4 2"/><line x1="1728" y1="612.5" x2="1911" y2="612.5" stroke="#48c8d3" stroke-dasharray="17 2 4 2"/><path d="M1073.4 301.7 A104.5 104.5 0 0 0 948.5 462.5" fill="none" stroke="#ffffff" /><path d="M948.5 462.5 V503.5 H1107.5 V495.5" fill="none" stroke="#ffffff" /><path d="M1028.5 302.2 A93 93 0 0 0 1028.5 488.5" fill="none" stroke="#ffffff" /><path d="M1073.4 301.7 L1096.8 295.5 H1340.5 V495.5 H1099 L1071.6 488.7" fill="none" stroke="#ffffff" /><path d="M1028.5 302.5 H1311.4 Q1317.5 302.5 1317.5 309 V482 Q1317.5 488.5 1311 488.5 H1028.5" fill="none" stroke="#ffffff" /><path d="M1340.5 301 L1345.5 303.5 M1340.5 490 L1345.5 487" fill="none" stroke="#ffffff" /><rect x="1346.5" y="291.5" width="90.0" height="208.0" fill="none" stroke="#ffffff" /><path d="M1436.5 291.5 L1441.5 288.5 H1513.5 V503.5 H1470.5 V288.5" fill="none" stroke="#ffffff" /><path d="M1436.5 493 L1443 482.5" fill="none" stroke="#ffffff" /><path d="M1513.5 308.5 H1520.5 V481.5 H1513.5" fill="none" stroke="#ffffff" /><path d="M1520.5 308.5 L1546.5 324 L1911 293" fill="none" stroke="#ffffff" /><path d="M1520.5 481.5 L1545.6 465.8 H1721.8 L1724 462 H1911" fill="none" stroke="#ffffff" /><rect x="948.5" y="503.5" width="159.0" height="36.0" fill="none" stroke="#ffffff" /><rect x="945.5" y="539.5" width="165.0" height="10.0" fill="none" stroke="#ffffff" /><path d="M963.9 549.5 V562 L968 567.5 H1087.2 L1091.7 562 V549.5" fill="none" stroke="#ffffff" /><path d="M968.3 567.5 V580 Q968.3 583.8 972 583.8 H1083.5 Q1087.2 583.8 1087.2 580 V567.5" fill="none" stroke="#ffffff" /><path d="M983.2 583.8 V590.6 M1072.4 583.8 V590.6" fill="none" stroke="#ffffff" /><path d="M924.5 613 V600.5 H950.5 V591.5 H1105.5 V600.5 H1132.5 V613" fill="none" stroke="#ffffff" /><line x1="971.5" y1="591.5" x2="971.5" y2="613" stroke="#ffffff" /><line x1="1084.5" y1="591.5" x2="1084.5" y2="613" stroke="#ffffff" /><line x1="929.2" y1="601" x2="929.2" y2="613" stroke="#e020e8" stroke-dasharray="3 2" stroke-width="1.2"/><line x1="945" y1="601" x2="945" y2="613" stroke="#e020e8" stroke-dasharray="3 2" stroke-width="1.2"/><line x1="1111.7" y1="601" x2="1111.7" y2="613" stroke="#e020e8" stroke-dasharray="3 2" stroke-width="1.2"/><line x1="1127.7" y1="601" x2="1127.7" y2="613" stroke="#e020e8" stroke-dasharray="3 2" stroke-width="1.2"/><line x1="988.4" y1="591" x2="988.4" y2="604" stroke="#e020e8" stroke-dasharray="3 2" stroke-width="1.2"/><line x1="997.2" y1="591" x2="997.2" y2="604" stroke="#e020e8" stroke-dasharray="3 2" stroke-width="1.2"/><line x1="1058.3" y1="591" x2="1058.3" y2="604" stroke="#e020e8" stroke-dasharray="3 2" stroke-width="1.2"/><line x1="1067.4" y1="591" x2="1067.4" y2="604" stroke="#e020e8" stroke-dasharray="3 2" stroke-width="1.2"/><path d="M985.5 613 V604.5 H1001 V613" fill="none" stroke="#e020e8" stroke-width="1.2"/><path d="M1055.5 613 V604.5 H1071 V613" fill="none" stroke="#e020e8" stroke-width="1.2"/><line x1="936.6" y1="595.4" x2="936.6" y2="618" stroke="#48c8d3" /><line x1="993.4" y1="587.7" x2="993.4" y2="618" stroke="#48c8d3" /><line x1="1063.1" y1="587.7" x2="1063.1" y2="618" stroke="#48c8d3" /><line x1="1119.4" y1="595.4" x2="1119.4" y2="618" stroke="#48c8d3" /><line x1="600" y1="613.5" x2="1494" y2="613.5" stroke="#ffffff" /><line x1="600" y1="634.5" x2="1443.5" y2="634.5" stroke="#ffffff" /><line x1="600" y1="641.5" x2="1443.5" y2="641.5" stroke="#ffffff" /><line x1="1443.5" y1="482.5" x2="1443.5" y2="672.5" stroke="#ffffff" /><line x1="600" y1="672.5" x2="1443.5" y2="672.5" stroke="#ffffff" /><rect x="858.5" y="678.5" width="339.0" height="50.0" fill="none" stroke="#ffffff" /><line x1="858.5" y1="672.5" x2="858.5" y2="678.5" stroke="#ffffff" /><line x1="1197.5" y1="672.5" x2="1197.5" y2="678.5" stroke="#ffffff" /><rect x="1267.5" y="678.5" width="146.0" height="50.0" fill="none" stroke="#ffffff" /><line x1="1267.5" y1="672.5" x2="1267.5" y2="678.5" stroke="#ffffff" /><path d="M1413.5 678.5 L1416 672.5" fill="none" stroke="#ffffff" /><path d="M1420.5 672.5 V693.5 H1472.3 L1486.5 679.5 V482.5" fill="none" stroke="#ffffff" /><rect x="1443.5" y="482.5" width="43.0" height="21.0" fill="none" stroke="#ffffff" /><path d="M1443.5 503.5 H1513.5" fill="none" stroke="#ffffff" /><line x1="600" y1="728.5" x2="1429.5" y2="728.5" stroke="#ffffff" /><line x1="626.5" y1="922.5" x2="1429.5" y2="922.5" stroke="#ffffff" /><line x1="626.5" y1="700" x2="626.5" y2="922.5" stroke="#ffffff" /><path d="M654.5 700 V888.5 H626.5 M682.5 922.5 V888.5 H654.5" fill="none" stroke="#ffffff" /><line x1="703.5" y1="728.5" x2="703.5" y2="922.5" stroke="#ffffff" /><line x1="708.5" y1="728.5" x2="708.5" y2="922.5" stroke="#ffffff" /><line x1="758.5" y1="728.5" x2="758.5" y2="922.5" stroke="#ffffff" /><line x1="763.5" y1="728.5" x2="763.5" y2="922.5" stroke="#ffffff" /><line x1="815.5" y1="728.5" x2="815.5" y2="922.5" stroke="#ffffff" /><line x1="820.5" y1="728.5" x2="820.5" y2="922.5" stroke="#ffffff" /><line x1="871.5" y1="728.5" x2="871.5" y2="922.5" stroke="#ffffff" /><line x1="875.5" y1="728.5" x2="875.5" y2="922.5" stroke="#ffffff" /><line x1="927.5" y1="728.5" x2="927.5" y2="922.5" stroke="#ffffff" /><line x1="933.5" y1="728.5" x2="933.5" y2="922.5" stroke="#ffffff" /><line x1="1120.5" y1="728.5" x2="1120.5" y2="922.5" stroke="#ffffff" /><line x1="1127.5" y1="728.5" x2="1127.5" y2="922.5" stroke="#ffffff" /><line x1="1181.5" y1="728.5" x2="1181.5" y2="922.5" stroke="#ffffff" /><line x1="1186.5" y1="728.5" x2="1186.5" y2="922.5" stroke="#ffffff" /><line x1="1234.5" y1="728.5" x2="1234.5" y2="922.5" stroke="#ffffff" /><line x1="1239.5" y1="728.5" x2="1239.5" y2="922.5" stroke="#ffffff" /><line x1="1292.5" y1="728.5" x2="1292.5" y2="922.5" stroke="#ffffff" /><line x1="1297.5" y1="728.5" x2="1297.5" y2="922.5" stroke="#ffffff" /><line x1="1347.5" y1="728.5" x2="1347.5" y2="922.5" stroke="#ffffff" /><line x1="1352.5" y1="728.5" x2="1352.5" y2="922.5" stroke="#ffffff" /><line x1="1401.5" y1="728.5" x2="1401.5" y2="922.5" stroke="#ffffff" /><line x1="1429.5" y1="728.5" x2="1429.5" y2="922.5" stroke="#ffffff" /><path d="M936.5 728.5 V800 Q936.5 811.5 948 811.5 H1109 Q1120.5 811.5 1120.5 800 V728.5" fill="none" stroke="#ffffff" /><rect x="1380.5" y="531.5" width="113.0" height="82.0" fill="none" stroke="#ffffff" /><rect x="1384.5" y="531.5" width="15.0" height="8.0" fill="none" stroke="#ffffff" /><rect x="1400.5" y="531.5" width="25.0" height="14.0" fill="none" stroke="#ffffff" /><line x1="1405.5" y1="545.5" x2="1405.5" y2="613.5" stroke="#ffffff" /><line x1="1420.5" y1="545.5" x2="1420.5" y2="613.5" stroke="#ffffff" /><line x1="1385.8" y1="533" x2="1385.8" y2="633" stroke="#e020e8" stroke-dasharray="5 2" stroke-width="1.1"/><line x1="1388.6" y1="533" x2="1388.6" y2="633" stroke="#e020e8" stroke-dasharray="5 2" stroke-width="1.1"/><line x1="1395.2" y1="533" x2="1395.2" y2="633" stroke="#e020e8" stroke-dasharray="5 2" stroke-width="1.1"/><line x1="1397.1" y1="533" x2="1397.1" y2="633" stroke="#e020e8" stroke-dasharray="5 2" stroke-width="1.1"/><line x1="1408.4" y1="533" x2="1408.4" y2="633" stroke="#e020e8" stroke-dasharray="5 2" stroke-width="1.1"/><line x1="1410.2" y1="533" x2="1410.2" y2="633" stroke="#e020e8" stroke-dasharray="5 2" stroke-width="1.1"/><line x1="1416.8" y1="533" x2="1416.8" y2="633" stroke="#e020e8" stroke-dasharray="5 2" stroke-width="1.1"/><line x1="1418.7" y1="533" x2="1418.7" y2="633" stroke="#e020e8" stroke-dasharray="5 2" stroke-width="1.1"/><line x1="1386" y1="590" x2="1386" y2="633" stroke="#e020e8" stroke-width="1.6"/><line x1="1397" y1="590" x2="1397" y2="633" stroke="#e020e8" stroke-width="1.6"/><line x1="1408" y1="590" x2="1408" y2="633" stroke="#e020e8" stroke-width="1.6"/><line x1="1419" y1="590" x2="1419" y2="633" stroke="#e020e8" stroke-width="1.6"/><line x1="1391.5" y1="528" x2="1391.5" y2="629" stroke="#48c8d3" /><line x1="1413.5" y1="528" x2="1413.5" y2="629" stroke="#48c8d3" /><circle cx="1464.7" cy="559.3" r="21.6" fill="none" stroke="#e020e8" stroke-dasharray="3 2"/><line x1="1437" y1="559.5" x2="1492" y2="559.5" stroke="#48c8d3" /><line x1="1464.5" y1="532" x2="1464.5" y2="586" stroke="#48c8d3" /><line x1="1443" y1="531.5" x2="1493" y2="531.5" stroke="#e020e8" stroke-dasharray="4 2"/><line x1="1443" y1="613.5" x2="1493" y2="613.5" stroke="#e020e8" stroke-dasharray="4 2"/><line x1="1443.5" y1="613.5" x2="1443.5" y2="650" stroke="#e020e8" stroke-dasharray="3 2"/><line x1="1159.5" y1="578.3" x2="1478.2" y2="492.7" stroke="#48c8d3" stroke-dasharray="14 3 3 3"/><polygon points="1212.8,545.3 1294.9,523.3 1304.2,558.0 1222.1,580.1" fill="none" stroke="#ffffff" /><polygon points="1180.0,558.3 1213.8,549.2 1221.6,578.2 1187.8,587.2" fill="none" stroke="#ffffff" /><polyline points="1192.6,554.9 1196.8,547.6 1206.5,545.0 1213.8,549.2" fill="none" stroke="#ffffff" /><polygon points="1294.9,523.3 1326.8,514.7 1335.8,548.5 1304.0,557.1" fill="none" stroke="#ffffff" /><polyline points="1297.8,522.5 1300.6,517.6 1313.2,514.2 1319.0,516.8" fill="none" stroke="#ffffff" /><polygon points="1322.2,517.0 1350.2,509.5 1358.8,541.3 1330.8,548.9" fill="none" stroke="#3ee03e" /><polyline points="1352.8,519.1 1439.7,495.8" fill="none" stroke="#ffffff" /><polyline points="1356.2,531.7 1443.1,508.3" fill="none" stroke="#ffffff" /><polygon points="1393.0,503.1 1409.4,498.7 1415.9,522.9 1399.5,527.3" fill="none" stroke="#ffffff" /><polyline points="1399.8,501.3 1406.3,525.5" fill="none" stroke="#ffffff" /><polyline points="1438.9,492.9 1443.7,487.4 1448.6,490.3 1453.8,509.6 1444.1,512.2" fill="none" stroke="#ffffff" /><circle cx="1188.5" cy="570.5" r="5.5" fill="none" stroke="#ffffff" stroke-width="1.6"/><polygon points="1161.2,565.4 1195.0,556.3 1202.3,583.4 1168.5,592.4" fill="none" stroke="#ffffff" /><polyline points="1163.6,562.7 1192.6,554.9" fill="none" stroke="#3ee03e" /><polyline points="1175.5,591.6 1202.6,584.3" fill="none" stroke="#3ee03e" /><polyline points="1157.5,606 1172.5,577" fill="none" stroke="#ffffff" /><line x1="1202.5" y1="582.5" x2="1202.5" y2="613" stroke="#ffffff" /><line x1="1157.5" y1="606.5" x2="1202.5" y2="606.5" stroke="#e020e8" stroke-dasharray="4 2"/><line x1="1162" y1="604" x2="1162" y2="613" stroke="#e020e8" /><line x1="1180" y1="604" x2="1180" y2="613" stroke="#e020e8" /><line x1="1197" y1="604" x2="1197" y2="613" stroke="#e020e8" /><line x1="1170.5" y1="600" x2="1170.5" y2="616" stroke="#48c8d3" /><line x1="1187.5" y1="600" x2="1187.5" y2="616" stroke="#48c8d3" /><path d="M1451.0 481.1 A20.5 20.5 0 0 1 1478.4 481.1" fill="none" stroke="#ffffff" stroke-width="1.3"/><path d="M1478.8 480.7 A21 21 0 1 1 1450.6 480.7" fill="none" stroke="#e020e8" stroke-width="1.4" stroke-dasharray="6 2"/><circle cx="1464.7" cy="496.3" r="11" fill="none" stroke="#e020e8" stroke-dasharray="3 2"/><circle cx="1464.7" cy="496.3" r="6.5" fill="none" stroke="#3ee03e" stroke-width="1.2"/><line x1="1448" y1="500" x2="1482" y2="490" stroke="#48c8d3" /><line x1="1462" y1="480" x2="1467" y2="512" stroke="#48c8d3" /><polyline points="837.5,543 845.3,543 861.7,547 863.5,551 864.3,554.7 892.1,561.6 887.3,580.3 884.3,590.7 857.4,582" fill="none" stroke="#ffffff" /><polyline points="837.5,545 837.5,580 852.6,586.3" fill="none" stroke="#ffffff" /><polyline points="852.6,549.9 848,588" fill="none" stroke="#ffffff" /><polyline points="846,545 840,578" fill="none" stroke="#ffffff" /><polyline points="864.3,554.7 857,578" fill="none" stroke="#ffffff" /><circle cx="867.8" cy="570.7" r="5.5" fill="none" stroke="#ffffff" stroke-width="1.5"/><line x1="838" y1="563" x2="893" y2="577.5" stroke="#48c8d3" stroke-dasharray="5 3"/><line x1="851" y1="543" x2="852" y2="553" stroke="#48c8d3" /><line x1="885" y1="573" x2="892" y2="578" stroke="#48c8d3" /><line x1="864.3" y1="555.1" x2="892" y2="561.6" stroke="#3ee03e" stroke-width="1.3"/><line x1="857.4" y1="582.9" x2="884.3" y2="589.8" stroke="#3ee03e" stroke-width="1.3"/><polyline points="852.6,583.7 852.6,607.1 898.6,607.1 889.5,581" fill="none" stroke="#8a1c1c" stroke-width="1.3"/><line x1="853.5" y1="608" x2="853.5" y2="613" stroke="#ffffff" /><line x1="898.6" y1="608" x2="898.6" y2="613" stroke="#ffffff" /><line x1="857" y1="608" x2="857" y2="613" stroke="#e020e8" /><line x1="866.5" y1="608" x2="866.5" y2="613" stroke="#e020e8" /><line x1="885.1" y1="608" x2="885.1" y2="613" stroke="#e020e8" /><line x1="895.1" y1="608" x2="895.1" y2="613" stroke="#e020e8" /><line x1="862.6" y1="604" x2="862.6" y2="616" stroke="#48c8d3" /><line x1="890.3" y1="604" x2="890.3" y2="616" stroke="#48c8d3" /><rect x="1624.5" y="495.5" width="93.0" height="78.0" fill="none" stroke="#ffffff" /><line x1="1624.5" y1="534.5" x2="1717.5" y2="534.5" stroke="#ffffff" /><circle cx="1671.1" cy="534.4" r="27" fill="none" stroke="#ffffff" /><path d="M1618.8 466 V506 Q1618.8 510.6 1624.5 510.6" fill="none" stroke="#ffffff" /><path d="M1650.4 553.9 L1686 640 L1704.1 678.7 Q1730 720 1783.9 767.1" fill="none" stroke="#ffffff" /><path d="M1709 692.6 Q1735 722 1782 762" fill="none" stroke="#ffffff" /><path d="M1700.7 540 L1728.4 609.3 L1759.6 664.8 L1813.4 715.1 L1868.8 770.6 Q1897 800 1898.3 840 V876" fill="none" stroke="#ffffff" /><path d="M1783.9 767.1 L1813.4 796.6 Q1842 820 1842.8 850 V878" fill="none" stroke="#ffffff" /><path d="M1783.9 767.1 L1772 1004 M1813.4 796.6 L1802.6 1004" fill="none" stroke="#ffffff" /><path d="M1813.4 845 Q1813.4 879.8 1855 879.8 Q1895 879.8 1911 870" fill="none" stroke="#ffffff" /><path d="M1779.8 462.9 L1732.6 504.7 L1720.5 523.6" fill="none" stroke="#ffffff" /><path d="M1754.2 462 Q1768 475 1754 490 L1721.8 516.9" fill="none" stroke="#ffffff" /><path d="M1732.6 507.4 L1771.7 539.8" fill="none" stroke="#ffffff" /><path d="M1721 522 Q1740 535 1736.6 548 L1719 583" fill="none" stroke="#ffffff" /><line x1="1728.5" y1="605.5" x2="1748.8" y2="605.5" stroke="#ffffff" /><path d="M1761.5 668.4 A122.5 122.5 0 0 1 1964.4 534.1" fill="none" stroke="#ffffff" /><path d="M1790.1 665.1 A96 96 0 0 1 1941.9 548.6" fill="none" stroke="#ffffff" /><circle cx="1870.6" cy="612.8" r="85" fill="none" stroke="#ffffff" /><circle cx="1870.6" cy="612.8" r="30.5" fill="none" stroke="#ffffff" /><line x1="1789" y1="658" x2="1789" y2="692.6" stroke="#ffffff" /><line x1="1815" y1="677" x2="1815" y2="716.8" stroke="#ffffff" /></svg>
<div class="a" style="left:1912px;top:177px;width:3px;height:828px;background:#39414e;"></div>
<div class="a" style="left:385px;top:977px;width:58px;height:27px;background:#262d37;"></div>
<svg style="left:388px;top:980px" width="52" height="22" viewBox="0 0 52 22"><path d="M4 3 V19 M7 3 V19" stroke="#d5d8dc" stroke-width="2" stroke-dasharray="2 1.2"/><path d="M14 7 L22 15 M22 7 L14 15" stroke="#d5d8dc" stroke-width="1.5"/><path d="M33 19 L42 10" stroke="#d5d8dc" stroke-width="2"/><path d="M41 11 C39 7 42 4 46 5 L44 7 L45 9 L47 8 C48 12 45 14 41 11" fill="#d5d8dc"/></svg>
<div class="a" style="left:442px;top:979px;width:1088px;height:25px;background:#c3c5c7;border:1px solid #14171b;border-radius:0 2px 2px 0"></div>
<svg style="left:447px;top:985px" width="28" height="14" viewBox="0 0 28 14"><rect x="0.5" y="0.5" width="15" height="12" fill="none" stroke="#2a2a2a" stroke-width="1.2"/><rect x="0.5" y="0.5" width="15" height="3" fill="#2a2a2a"/><path d="M2.5 6 L5 8 L2.5 10 M6 10.5 H10" stroke="#2a2a2a" fill="none"/><path d="M18 5 H25 L21.5 9 Z" fill="#2a2a2a"/></svg>
<div class="t " style="left:479.6px;top:985.5px;font-style:italic;color:#65696f;font-size:12px;letter-spacing:0.1px">Type  a  command</div>
<svg style="left:1517px;top:987px" width="11" height="7" viewBox="0 0 11 7"><path d="M0 6 L5 0 L10 6 Z" fill="#333"/></svg>
<svg style="left:0px;top:1005px" width="240" height="20"><path d="M12 0 C16 0 16 18 22 18 H66 C70 18 70 0 74 0 Z" fill="#3b4453"/><path d="M75 0 C79 0 79 18 85 18 H130 C134 18 134 0 138 0 Z" fill="#2c333f"/><path d="M140 0 C144 0 144 18 150 18 H196 C200 18 200 0 204 0 Z" fill="#2c333f"/><path d="M207 0 C210 0 210 18 214 18 H226 C229 18 229 0 231 0 Z" fill="#2c333f"/></svg>
<div class="t " style="left:27.5px;top:1008px;color:#f2f4f6;font-weight:bold">Model</div>
<div class="t " style="left:85px;top:1008px;color:#d8dce1">Layout1</div>
<div class="t " style="left:150px;top:1008px;color:#d8dce1">Layout2</div>
<svg style="left:213px;top:1009px" width="10" height="10" viewBox="0 0 10 10"><path d="M5 0.5 V9.5 M0.5 5 H9.5" stroke="#c8ccd2" stroke-width="1.8"/></svg>
<div class="a" style="left:1395px;top:1007px;width:47px;height:24px;background:#2f3744;"></div>
<div class="a" style="left:1445px;top:1007px;width:166px;height:24px;background:#2f3744;"></div>
<div class="a" style="left:1614px;top:1007px;width:38px;height:24px;background:#2f3744;"></div>
<div class="a" style="left:1654px;top:1007px;width:24px;height:24px;background:#2f3744;"></div>
<div class="a" style="left:1681px;top:1007px;width:25px;height:24px;background:#2f3744;"></div>
<div class="a" style="left:1708px;top:1007px;width:96px;height:24px;background:#2f3744;"></div>
<div class="a" style="left:1807px;top:1007px;width:76px;height:24px;background:#2f3744;"></div>
<div class="a" style="left:1885px;top:1007px;width:26px;height:24px;background:#2f3744;"></div>
<div class="a" style="left:1470px;top:1007px;width:22px;height:24px;background:#5a87bf;"></div>
<div class="a" style="left:1549px;top:1007px;width:22px;height:24px;background:#5a87bf;"></div>
<div class="a" style="left:1573px;top:1007px;width:22px;height:24px;background:#5a87bf;"></div>
<div class="a" style="left:1709px;top:1007px;width:22px;height:24px;background:#5a87bf;"></div>
<div class="a" style="left:1781px;top:1007px;width:22px;height:24px;background:#5a87bf;"></div>
<div class="t " style="left:1398px;top:1013px;color:#e6e9ed;font-size:12px">MODEL</div>
<svg style="left:1445px;top:1007px" width="470" height="24" viewBox="0 0 470 24"><path d="M5 4 V18 H20" stroke="#d5d9de" stroke-width="1.2" fill="none"/><path d="M5 14 H9 V18" stroke="#d5d9de" fill="none"/><circle cx="35" cy="12" r="6" stroke="#fff" stroke-width="1.3" fill="none"/><path d="M35 12 L44 6 M35 12 H43" stroke="#fff" stroke-width="1.3"/><path d="M53 11 H58 L55.5 14 Z" fill="#d5d9de"/><path d="M67 4 L78 20" stroke="#e06060" stroke-width="1.2"/><path d="M72 3 V21" stroke="#60c060" stroke-width="1.2"/><circle cx="72" cy="12" r="1.5" fill="#d5d9de"/><path d="M92 11 H97 L94.5 14 Z" fill="#d5d9de"/><path d="M107 18 H124 M107 18 L120 6" stroke="#fff" stroke-width="1.3"/><rect x="133.5" y="5.5" width="13" height="13" stroke="#fff" stroke-width="1.2" fill="none"/><rect x="131" y="3" width="4" height="4" fill="#fff"/><path d="M154 11 H159 L156.5 14 Z" fill="#d5d9de"/><circle cx="182" cy="12" r="6" fill="#d5d9de"/><circle cx="182" cy="12" r="2.5" fill="#2f3744"/><path d="M182 3 V21 M173 12 H191 M175.5 5.5 L188.5 18.5 M188.5 5.5 L175.5 18.5" stroke="#d5d9de" stroke-width="2.5"/><circle cx="182" cy="12" r="2.5" fill="#2f3744"/><path d="M197 11 H202 L199.5 14 Z" fill="#d5d9de"/><path d="M221 4 V20 M213 12 H229" stroke="#fff" stroke-width="2"/><rect x="244.5" y="4.5" width="7" height="7" stroke="#d5d9de" fill="none"/><circle cx="256" cy="9" r="3.5" stroke="#d5d9de" fill="none"/><path d="M248 14 L252 20 H244 Z" stroke="#d5d9de" fill="none"/><rect x="268" y="5" width="7" height="7" fill="#fff"/><rect x="275" y="12" width="7" height="7" fill="#fff"/><rect x="268" y="12" width="6" height="7" fill="#fff" opacity="0.3"/><rect x="290" y="7" width="6" height="6" fill="#d5d9de"/><rect x="290" y="14" width="6" height="6" fill="#d5d9de"/><rect x="297" y="14" width="6" height="6" fill="#d5d9de"/><path d="M300 13 V5 M297 8 L300 4 L303 8" stroke="#6cb8f0" stroke-width="1.5" fill="none"/><path d="M322 5 V11 M319 8 H325" stroke="#d5d9de"/><rect x="322" y="10" width="6" height="5" stroke="#d5d9de" fill="none"/><rect x="326" y="14" width="6" height="6" fill="#d5d9de"/><path d="M331 15 C331 11 337 11 337 15 V20 H330" stroke="#d5d9de" fill="none"/><path d="M345 16 V7 C345 3 351 3 351 7 V14 C351 16 348 16 348 14 V8" stroke="#fff" stroke-width="1.3" fill="none"/><rect x="349" y="14" width="7" height="6" fill="#fff"/><g transform="translate(-6,0)"><path d="M376 5 V17 M372 9 H384" stroke="#d5d9de"/><rect x="370" y="8" width="12" height="10" fill="#e8c060"/><path d="M376 16 L379 19 L386 11" stroke="#40c040" stroke-width="2" fill="none"/><rect x="373" y="5" width="6" height="5" fill="#5aa0e0"/></g><g transform="translate(-11,0)"><rect x="399.5" y="5.5" width="14" height="12" stroke="#fff" fill="none"/><path d="M400 16 L405 9 L409 13 L413 8" stroke="#fff" fill="none"/><path d="M408 20 L412 13 L416 20 Z" fill="#e07020"/></g><g transform="translate(-13,0)"><path d="M426 16 V7 C426 3 431 3 431 7 V12 H441 L445 16 V20 H426 Z" stroke="#d8b880" stroke-width="1.2" fill="none"/></g><path d="M446 6 H464 M446 12 H464 M446 18 H464" stroke="#fff" stroke-width="2.2"/></svg></svg>
<div class="a" style="left:54px;top:242px;width:784px;height:593px;background:#f0f0f0;border:2px solid #0c2d58;box-shadow:inset 0 0 0 1px #e6f6ff"></div>
<div class="a" style="left:56px;top:244px;width:780px;height:30px;background:#ffffff;"></div>
<svg style="left:64px;top:250px" width="16" height="16" viewBox="0 0 16 16"><rect x="0" y="0" width="16" height="16" fill="#f6dcdc"/><path d="M2 14 L7 2 H9.5 L14 14 H11 L10 11 H6 L5 14 Z M6.8 8.5 H9.3 L8 5 Z" fill="#c8202a"/></svg>
<div class="t " style="left:85px;top:252.5px;color:#000;letter-spacing:-0.1px">Mechanical Layer Manager</div>
<svg style="left:815px;top:252px" width="12" height="12" viewBox="0 0 12 12"><path d="M1 1 L11 11 M11 1 L1 11" stroke="#1a1a1a" stroke-width="1.1"/></svg>
<svg style="left:66px;top:282px" width="182" height="22" viewBox="0 0 182 22"><path d="M3 13 L11 10 L19 13 L11 17 Z" fill="#9cc0e8" stroke="#5a7ea8" stroke-width="0.8"/><path d="M3 15 L11 18 L19 15" stroke="#5a7ea8" fill="none" stroke-width="0.8"/><circle cx="7" cy="7" r="3" fill="#f8e040"/><path d="M7 1 V3 M7 11 V13 M1 7 H3 M11 7 H13 M3 3 L4.5 4.5 M11 3 L9.5 4.5 M3 11 L4.5 9.5" stroke="#e8c020" stroke-width="1"/><path d="M26 8 H33 L29.5 12 Z" fill="#111"/><path d="M43 4 L55 17 M55 4 L43 17" stroke="#9a9a9a" stroke-width="3"/><path d="M68 11 L72 15 L79 6" stroke="#22b020" stroke-width="2.6" fill="none"/><path d="M89 8 L97 4 L105 8 L97 12 Z" fill="#f0e040" stroke="#b8a820" stroke-width="0.8"/><path d="M89 12 L97 16 L105 12" stroke="#7890b0" fill="none" stroke-width="1.2"/><circle cx="97" cy="13" r="3" fill="#e8eef8" stroke="#7a90a8"/><path d="M113 15 L121 11 L129 15 L121 19 Z" fill="#9cb8e0" stroke="#5a7ea8" stroke-width="0.8"/><path d="M125 3 C118 4 118 9 120 13 L117 11 L121 16 L124 11 L121 12 C120 9 121 6 126 6 Z" fill="#3d78d0"/><rect x="137" y="9" width="10" height="10" fill="#f0e040" stroke="#a09020" stroke-width="0.8"/><circle cx="148" cy="9" r="5" fill="#f0e040" stroke="#a09020" stroke-width="0.8"/><path d="M145 11 L145 21 L148 18 L151 22 L152 21 L149 17 L153 17 Z" fill="#111" stroke="#fff" stroke-width="0.5"/><rect x="157.5" y="0.5" width="23" height="20" fill="#cce4f7" stroke="#99c6ee"/><path d="M163 7 C166 3 172 3 175 7 C172 10 166 10 163 7 Z" fill="#fff" stroke="#222" stroke-width="1.2"/><circle cx="169" cy="6.5" r="2" fill="#222"/><path d="M162 17 L165 14 M166 18 L171 13 M170 18 L175 14 M174 18 L176 16" stroke="#9aa8b8" stroke-width="1"/></svg>
<div class="a" style="left:449px;top:282px;width:380px;height:21px;background:#ffffff;border:1px solid #1b1b1b;box-shadow:inset 0 0 0 0.5px #333"></div>
<div class="t " style="left:453px;top:286.5px;color:#6d6d6d">Search for layer</div>
<svg style="left:811px;top:284px" width="15" height="16" viewBox="0 0 15 16"><circle cx="9" cy="6" r="4.2" fill="none" stroke="#2a5aa8" stroke-width="1.8"/><path d="M6 9 L1.5 13.5" stroke="#2a5aa8" stroke-width="2.2"/></svg>
<div class="t " style="left:63px;top:320.5px;color:#000">Filter Type:</div>
<div class="a" style="left:142px;top:316px;width:167px;height:21px;background:#e5e5e5;border:1px solid #adadad"></div>
<div class="t " style="left:146px;top:320.5px;color:#000">All</div>
<svg style="left:293px;top:322px" width="10" height="8" viewBox="0 0 10 8"><path d="M1 1 L5 5 L9 1" stroke="#333" stroke-width="1.1" fill="none"/></svg>
<div class="t " style="left:354px;top:320.5px;color:#000;letter-spacing:-0.2px">Current Layer:</div>
<div class="a" style="left:449px;top:316px;width:380px;height:21px;background:#f0f0f0;border:1px solid #7a7a7a"></div>
<div class="t " style="left:452.5px;top:320.5px;color:#000">0</div>
<div class="a" style="left:64px;top:349px;width:765px;height:408px;background:#ffffff;border:1px solid #828790"></div>
<div class="a" style="left:433px;top:350px;width:29px;height:24px;background:#e8eaec;"></div>
<div class="a" style="left:95px;top:351px;width:1px;height:23px;background:#e5e5e5;"></div>
<div class="a" style="left:169px;top:351px;width:1px;height:23px;background:#e5e5e5;"></div>
<div class="a" style="left:198px;top:351px;width:1px;height:23px;background:#e5e5e5;"></div>
<div class="a" style="left:227px;top:351px;width:1px;height:23px;background:#e5e5e5;"></div>
<div class="a" style="left:256px;top:351px;width:1px;height:23px;background:#e5e5e5;"></div>
<div class="a" style="left:315px;top:351px;width:1px;height:23px;background:#e5e5e5;"></div>
<div class="a" style="left:374px;top:351px;width:1px;height:23px;background:#e5e5e5;"></div>
<div class="a" style="left:433px;top:351px;width:1px;height:23px;background:#e5e5e5;"></div>
<div class="a" style="left:461px;top:351px;width:1px;height:23px;background:#e5e5e5;"></div>
<div class="a" style="left:490px;top:351px;width:1px;height:23px;background:#e5e5e5;"></div>
<div class="a" style="left:519px;top:351px;width:1px;height:23px;background:#e5e5e5;"></div>
<div class="a" style="left:548px;top:351px;width:1px;height:23px;background:#e5e5e5;"></div>
<div class="a" style="left:577px;top:351px;width:1px;height:23px;background:#e5e5e5;"></div>
<div class="a" style="left:711px;top:351px;width:1px;height:23px;background:#e5e5e5;"></div>
<div class="a" style="left:807px;top:351px;width:1px;height:23px;background:#e5e5e5;"></div>
<div class="t " style="left:74.2px;top:357px;color:#1a1a1a;letter-spacing:-0.2px">S...</div>
<div class="t " style="left:103.4px;top:357px;color:#1a1a1a;letter-spacing:-0.2px">Name</div>
<div class="t " style="left:177.3px;top:357px;color:#1a1a1a;letter-spacing:-0.2px">O...</div>
<div class="t " style="left:206px;top:357px;color:#1a1a1a;letter-spacing:-0.2px">F...</div>
<div class="t " style="left:235px;top:357px;color:#1a1a1a;letter-spacing:-0.2px">L...</div>
<div class="t " style="left:264px;top:357px;color:#1a1a1a;letter-spacing:-0.2px">Color</div>
<div class="t " style="left:323px;top:357px;color:#1a1a1a;letter-spacing:-0.2px">Linety...</div>
<div class="t " style="left:382.5px;top:357px;color:#1a1a1a;letter-spacing:-0.2px">Linew...</div>
<div class="t " style="left:441px;top:357px;color:#1a1a1a;letter-spacing:-0.2px">P...</div>
<div class="t " style="left:468px;top:357px;color:#1a1a1a;letter-spacing:-0.2px">R...</div>
<div class="t " style="left:497px;top:357px;color:#1a1a1a;letter-spacing:-0.2px">O...</div>
<div class="t " style="left:526px;top:357px;color:#1a1a1a;letter-spacing:-0.2px">O...</div>
<div class="t " style="left:555.3px;top:357px;color:#1a1a1a;letter-spacing:-0.2px">O...</div>
<div class="t " style="left:584px;top:357px;color:#1a1a1a;letter-spacing:-0.2px">Associated Objects</div>
<div class="t " style="left:718px;top:357px;color:#1a1a1a;letter-spacing:-0.2px">Description</div>
<div class="a" style="left:809px;top:350px;width:19px;height:406px;background:#f0f0f0;"></div>
<div class="a" style="left:811px;top:428px;width:15px;height:238px;background:#cdcdcd;"></div>
<svg style="left:813px;top:356px" width="10" height="8" viewBox="0 0 10 8"><path d="M1 6 L5 2 L9 6" stroke="#606060" stroke-width="1.3" fill="none"/></svg>
<svg style="left:813px;top:741px" width="10" height="8" viewBox="0 0 10 8"><path d="M1 2 L5 6 L9 2" stroke="#606060" stroke-width="1.3" fill="none"/></svg>
<div class="t " style="left:97.5px;top:378.5px;color:#000000;letter-spacing:-0.25px">AM_5</div>
<div class="a" style="left:260px;top:380px;width:10px;height:10px;background:#00e000;border:1px solid #3a3a3a"></div>
<div class="t " style="left:274.5px;top:378.5px;color:#000000;letter-spacing:-0.35px">green</div>
<div class="t " style="left:317.5px;top:378.5px;color:#000000;letter-spacing:-0.1px">Continu...</div>
<div class="t " style="left:376.3px;top:378.5px;color:#000000;letter-spacing:-0.2px">0.25 mm</div>
<div class="t " style="left:580.3px;top:378.5px;color:#000000;letter-spacing:-0.3px">Diagonal Cross for Pla...</div>
<div class="t " style="left:97.5px;top:397.5px;color:#000000;letter-spacing:-0.25px">AM_6</div>
<div class="a" style="left:260px;top:399px;width:10px;height:10px;background:#f0f000;border:1px solid #3a3a3a"></div>
<div class="t " style="left:274.5px;top:397.5px;color:#000000;letter-spacing:-0.35px">yellow</div>
<div class="t " style="left:317.5px;top:397.5px;color:#000000;letter-spacing:-0.1px">Continu...</div>
<div class="t " style="left:376.3px;top:397.5px;color:#000000;letter-spacing:-0.2px">0.35 mm</div>
<div class="t " style="left:580.3px;top:397.5px;color:#000000;letter-spacing:-0.3px">Text Very Small, Text S...</div>
<div class="t " style="left:97.5px;top:416.5px;color:#000000;letter-spacing:-0.25px">AM_7</div>
<div class="a" style="left:260px;top:418px;width:10px;height:10px;background:#00f0f0;border:1px solid #3a3a3a"></div>
<div class="t " style="left:274.5px;top:416.5px;color:#000000;letter-spacing:-0.35px">cyan</div>
<div class="t " style="left:317.5px;top:416.5px;color:#000000;letter-spacing:-0.1px">AM_ISO...</div>
<div class="t " style="left:376.3px;top:416.5px;color:#000000;letter-spacing:-0.2px">0.25 mm</div>
<div class="t " style="left:580.3px;top:416.5px;color:#000000;letter-spacing:-0.3px">Centerline, narrow, Ce...</div>
<div class="t " style="left:97.5px;top:435.5px;color:#000000;letter-spacing:-0.25px">AM_8</div>
<div class="a" style="left:260px;top:437px;width:10px;height:10px;background:#e00000;border:1px solid #3a3a3a"></div>
<div class="t " style="left:274.5px;top:435.5px;color:#000000;letter-spacing:-0.35px">red</div>
<div class="t " style="left:317.5px;top:435.5px;color:#000000;letter-spacing:-0.1px">Continu...</div>
<div class="t " style="left:376.3px;top:435.5px;color:#000000;letter-spacing:-0.2px">0.25 mm</div>
<div class="t " style="left:580.3px;top:435.5px;color:#000000;letter-spacing:-0.3px">FEA: Mesh, FEA: Numb...</div>
<div class="t " style="left:97.5px;top:454.5px;color:#000000;letter-spacing:-0.25px">AM_9</div>
<div class="a" style="left:260px;top:456px;width:10px;height:10px;background:#a0a0a0;border:1px solid #3a3a3a"></div>
<div class="t " style="left:274.5px;top:454.5px;color:#000000;letter-spacing:-0.35px">253</div>
<div class="t " style="left:317.5px;top:454.5px;color:#000000;letter-spacing:-0.1px">Continu...</div>
<div class="t " style="left:376.3px;top:454.5px;color:#000000;letter-spacing:-0.2px">0.00 mm</div>
<div class="t " style="left:580.3px;top:454.5px;color:#000000;letter-spacing:-0.3px">Behind</div>
<div class="t " style="left:97.5px;top:473.5px;color:#000000;letter-spacing:-0.25px">AM_10</div>
<div class="a" style="left:260px;top:475px;width:10px;height:10px;background:#ffffff;border:1px solid #3a3a3a"></div>
<div class="t " style="left:274.5px;top:473.5px;color:#000000;letter-spacing:-0.35px">white</div>
<div class="t " style="left:317.5px;top:473.5px;color:#000000;letter-spacing:-0.1px">AM_ISO...</div>
<div class="t " style="left:376.3px;top:473.5px;color:#000000;letter-spacing:-0.2px">0.50 mm</div>
<div class="t " style="left:580.3px;top:473.5px;color:#000000;letter-spacing:-0.3px">Section Line, Plane Line</div>
<div class="t " style="left:97.5px;top:492.5px;color:#000000;letter-spacing:-0.25px">AM_0N</div>
<div class="a" style="left:260px;top:494px;width:10px;height:10px;background:#ffffff;border:1px solid #3a3a3a"></div>
<div class="t " style="left:274.5px;top:492.5px;color:#000000;letter-spacing:-0.35px">white</div>
<div class="t " style="left:317.5px;top:492.5px;color:#000000;letter-spacing:-0.1px">Continu...</div>
<div class="t " style="left:376.3px;top:492.5px;color:#000000;letter-spacing:-0.2px">0.50 mm</div>
<div class="t " style="left:580.3px;top:492.5px;color:#000000;letter-spacing:-0.3px">Standard Parts: Conto...</div>
<div class="t " style="left:97.5px;top:511.5px;color:#000000;letter-spacing:-0.25px">AM_3N</div>
<div class="a" style="left:260px;top:513px;width:10px;height:10px;background:#e000e0;border:1px solid #3a3a3a"></div>
<div class="t " style="left:274.5px;top:511.5px;color:#000000;letter-spacing:-0.35px">magen</div>
<div class="t " style="left:317.5px;top:511.5px;color:#000000;letter-spacing:-0.1px">AM_ISO...</div>
<div class="t " style="left:376.3px;top:511.5px;color:#000000;letter-spacing:-0.2px">0.25 mm</div>
<div class="t " style="left:580.3px;top:511.5px;color:#000000;letter-spacing:-0.3px">Standard Parts: Hidden...</div>
<div class="t " style="left:97.5px;top:530.5px;color:#000000;letter-spacing:-0.25px">AM_4N</div>
<div class="a" style="left:260px;top:532px;width:10px;height:10px;background:#00e000;border:1px solid #3a3a3a"></div>
<div class="t " style="left:274.5px;top:530.5px;color:#000000;letter-spacing:-0.35px">green</div>
<div class="t " style="left:317.5px;top:530.5px;color:#000000;letter-spacing:-0.1px">Continu...</div>
<div class="t " style="left:376.3px;top:530.5px;color:#000000;letter-spacing:-0.2px">0.25 mm</div>
<div class="t " style="left:580.3px;top:530.5px;color:#000000;letter-spacing:-0.3px">Standard Parts: Thread...</div>
<div class="t " style="left:97.5px;top:549.5px;color:#000000;letter-spacing:-0.25px">AM_7N</div>
<div class="a" style="left:260px;top:551px;width:10px;height:10px;background:#00f0f0;border:1px solid #3a3a3a"></div>
<div class="t " style="left:274.5px;top:549.5px;color:#000000;letter-spacing:-0.35px">cyan</div>
<div class="t " style="left:317.5px;top:549.5px;color:#000000;letter-spacing:-0.1px">AM_ISO...</div>
<div class="t " style="left:376.3px;top:549.5px;color:#000000;letter-spacing:-0.2px">0.25 mm</div>
<div class="t " style="left:580.3px;top:549.5px;color:#000000;letter-spacing:-0.3px">Standard Parts: Centerl...</div>
<div class="t " style="left:97.5px;top:568.5px;color:#000000;letter-spacing:-0.25px">AM_8N</div>
<div class="a" style="left:260px;top:570px;width:10px;height:10px;background:#e00000;border:1px solid #3a3a3a"></div>
<div class="t " style="left:274.5px;top:568.5px;color:#000000;letter-spacing:-0.35px">red</div>
<div class="t " style="left:317.5px;top:568.5px;color:#000000;letter-spacing:-0.1px">Continu...</div>
<div class="t " style="left:376.3px;top:568.5px;color:#000000;letter-spacing:-0.2px">0.25 mm</div>
<div class="t " style="left:580.3px;top:568.5px;color:#000000;letter-spacing:-0.3px">Standard Parts: Hatch</div>
<div class="t " style="left:97.5px;top:587.5px;color:#000000;letter-spacing:-0.25px">AM_CL</div>
<div class="a" style="left:260px;top:589px;width:10px;height:10px;background:#e00000;border:1px solid #3a3a3a"></div>
<div class="t " style="left:274.5px;top:587.5px;color:#000000;letter-spacing:-0.35px">red</div>
<div class="t " style="left:317.5px;top:587.5px;color:#000000;letter-spacing:-0.1px">Amconstr</div>
<div class="t " style="left:376.3px;top:587.5px;color:#000000;letter-spacing:-0.2px">0.25 mm</div>
<div class="t " style="left:580.3px;top:587.5px;color:#000000;letter-spacing:-0.3px">Construction Line</div>
<div class="a" style="left:65px;top:603px;width:743px;height:19px;background:#0078d7;border-top:1px solid #d08a40;border-bottom:1px solid #d08a40"></div>
<div class="t " style="left:97.5px;top:606.5px;color:#ffffff;letter-spacing:-0.25px">0</div>
<div class="a" style="left:260px;top:608px;width:10px;height:10px;background:#ffffff;border:1px solid #fff"></div>
<div class="t " style="left:274.5px;top:606.5px;color:#ffffff;letter-spacing:-0.35px">white</div>
<div class="t " style="left:317.5px;top:606.5px;color:#ffffff;letter-spacing:-0.1px">Continu...</div>
<div class="t " style="left:376.3px;top:606.5px;color:#ffffff;letter-spacing:-0.2px">Default</div>
<div class="t " style="left:97.5px;top:625.5px;color:#000000;letter-spacing:-0.25px">3</div>
<div class="a" style="left:260px;top:627px;width:10px;height:10px;background:#e000e0;border:1px solid #3a3a3a"></div>
<div class="t " style="left:274.5px;top:625.5px;color:#000000;letter-spacing:-0.35px">magen</div>
<div class="t " style="left:317.5px;top:625.5px;color:#000000;letter-spacing:-0.1px">GEN3</div>
<div class="t " style="left:376.3px;top:625.5px;color:#000000;letter-spacing:-0.2px">Default</div>
<div class="t " style="left:97.5px;top:644.5px;color:#000000;letter-spacing:-0.25px">3A</div>
<div class="a" style="left:260px;top:646px;width:10px;height:10px;background:#e000e0;border:1px solid #3a3a3a"></div>
<div class="t " style="left:274.5px;top:644.5px;color:#000000;letter-spacing:-0.35px">magen</div>
<div class="t " style="left:317.5px;top:644.5px;color:#000000;letter-spacing:-0.1px">GEN3A</div>
<div class="t " style="left:376.3px;top:644.5px;color:#000000;letter-spacing:-0.2px">Default</div>
<div class="t " style="left:97.5px;top:663.5px;color:#000000;letter-spacing:-0.25px">4</div>
<div class="a" style="left:260px;top:665px;width:10px;height:10px;background:#00e000;border:1px solid #3a3a3a"></div>
<div class="t " style="left:274.5px;top:663.5px;color:#000000;letter-spacing:-0.35px">green</div>
<div class="t " style="left:317.5px;top:663.5px;color:#000000;letter-spacing:-0.1px">Continu...</div>
<div class="t " style="left:376.3px;top:663.5px;color:#000000;letter-spacing:-0.2px">Default</div>
<div class="t " style="left:97.5px;top:682.5px;color:#000000;letter-spacing:-0.25px">5</div>
<div class="a" style="left:260px;top:684px;width:10px;height:10px;background:#00e000;border:1px solid #3a3a3a"></div>
<div class="t " style="left:274.5px;top:682.5px;color:#000000;letter-spacing:-0.35px">green</div>
<div class="t " style="left:317.5px;top:682.5px;color:#000000;letter-spacing:-0.1px">Continu...</div>
<div class="t " style="left:376.3px;top:682.5px;color:#000000;letter-spacing:-0.2px">Default</div>
<div class="t " style="left:97.5px;top:701.5px;color:#000000;letter-spacing:-0.25px">7</div>
<div class="a" style="left:260px;top:703px;width:10px;height:10px;background:#00f0f0;border:1px solid #3a3a3a"></div>
<div class="t " style="left:274.5px;top:701.5px;color:#000000;letter-spacing:-0.35px">cyan</div>
<div class="t " style="left:317.5px;top:701.5px;color:#000000;letter-spacing:-0.1px">GEN7</div>
<div class="t " style="left:376.3px;top:701.5px;color:#000000;letter-spacing:-0.2px">Default</div>
<div class="t " style="left:97.5px;top:720.5px;color:#000000;letter-spacing:-0.25px">7A</div>
<div class="a" style="left:260px;top:722px;width:10px;height:10px;background:#00f0f0;border:1px solid #3a3a3a"></div>
<div class="t " style="left:274.5px;top:720.5px;color:#000000;letter-spacing:-0.35px">cyan</div>
<div class="t " style="left:317.5px;top:720.5px;color:#000000;letter-spacing:-0.1px">GEN7A</div>
<div class="t " style="left:376.3px;top:720.5px;color:#000000;letter-spacing:-0.2px">Default</div>
<div class="t " style="left:97.5px;top:739.5px;color:#000000;letter-spacing:-0.25px">8</div>
<div class="a" style="left:260px;top:741px;width:10px;height:10px;background:#e00000;border:1px solid #3a3a3a"></div>
<div class="t " style="left:274.5px;top:739.5px;color:#000000;letter-spacing:-0.35px">red</div>
<div class="t " style="left:317.5px;top:739.5px;color:#000000;letter-spacing:-0.1px">Continu...</div>
<div class="t " style="left:376.3px;top:739.5px;color:#000000;letter-spacing:-0.2px">Default</div>
<svg style="left:0;top:0" width="900" height="900"><path d="M71 387 L79 384 L86 388 L78 391 Z" fill="#b4cff0" stroke="#6c8cb4" stroke-width="0.8"/><path d="M71 389 L78 392.5 L86 389.5" stroke="#6c8cb4" fill="none" stroke-width="0.9"/><circle cx="76.5" cy="382" r="3.8" fill="#f4f4f4" stroke="#555" stroke-width="1.1"/><path d="M76.5 376.5 V378.2 M76.5 385.8 V387.5 M71 382 H72.7 M80.3 382 H82 M72.5 378 L73.8 379.3 M80.5 378 L79.2 379.3 M72.5 386 L73.8 384.7" stroke="#555" stroke-width="1.3"/><path d="M181.5 378 C177.5 378 176.5 381 176.5 382.5 C176.5 384.5 179.0 385.5 179.5 387 H183.5 C184.0 385.5 186.5 384.5 186.5 382.5 C186.5 381 185.5 378 181.5 378 Z" fill="#fffbe0" stroke="#c8b830" stroke-width="1.1"/><rect x="179.5" y="387" width="4" height="3" fill="#4a5aa0"/><rect x="204" y="377" width="13" height="13" fill="#e0f060" opacity="0.55"/><circle cx="210.5" cy="383.5" r="6" fill="#f2dc50" stroke="#2c4c6a" stroke-width="1.1"/><path d="M234 385.5 V381.5 C234 378 240.5 378 240.5 381.5 V383" stroke="#4a4a08" stroke-width="3.2" fill="none"/><path d="M234 385.5 V381.5 C234 378 240.5 378 240.5 381.5 V383" stroke="#f4f070" stroke-width="1.4" fill="none"/><rect x="237.5" y="383.5" width="8" height="7.5" rx="2" fill="#e2e040" stroke="#4a4a08" stroke-width="1"/><path d="M239 386 H244 M239 388.5 H244" stroke="#b8b820" stroke-width="0.8"/><path d="M442.5 379.5 L447 377.5 L449.5 383.5 L445 385.5 Z" fill="#e4f0f8" stroke="#2c3258" stroke-width="1"/><path d="M441 385 L448 383 L453 385.5 V388 L446 390.5 L441 388.5 Z" fill="#eceef8" stroke="#1c2040" stroke-width="1.1"/><path d="M446 387.5 L453 385.5" stroke="#1c2040" stroke-width="0.9"/><path d="M469.0 383.5 L472.5 387 L480.0 379.5" stroke="#0e5a0e" stroke-width="4" fill="none" stroke-linejoin="miter"/><path d="M469.0 383.5 L472.5 387 L480.0 379.5" stroke="#22cc22" stroke-width="2.2" fill="none"/><path d="M71 406 L79 403 L86 407 L78 410 Z" fill="#b4cff0" stroke="#6c8cb4" stroke-width="0.8"/><path d="M71 408 L78 411.5 L86 408.5" stroke="#6c8cb4" fill="none" stroke-width="0.9"/><circle cx="76.5" cy="401" r="3.8" fill="#f4f4f4" stroke="#555" stroke-width="1.1"/><path d="M76.5 395.5 V397.2 M76.5 404.8 V406.5 M71 401 H72.7 M80.3 401 H82 M72.5 397 L73.8 398.3 M80.5 397 L79.2 398.3 M72.5 405 L73.8 403.7" stroke="#555" stroke-width="1.3"/><path d="M181.5 397 C177.5 397 176.5 400 176.5 401.5 C176.5 403.5 179.0 404.5 179.5 406 H183.5 C184.0 404.5 186.5 403.5 186.5 401.5 C186.5 400 185.5 397 181.5 397 Z" fill="#fffbe0" stroke="#c8b830" stroke-width="1.1"/><rect x="179.5" y="406" width="4" height="3" fill="#4a5aa0"/><rect x="204" y="396" width="13" height="13" fill="#e0f060" opacity="0.55"/><circle cx="210.5" cy="402.5" r="6" fill="#f2dc50" stroke="#2c4c6a" stroke-width="1.1"/><path d="M234 404.5 V400.5 C234 397 240.5 397 240.5 400.5 V402" stroke="#4a4a08" stroke-width="3.2" fill="none"/><path d="M234 404.5 V400.5 C234 397 240.5 397 240.5 400.5 V402" stroke="#f4f070" stroke-width="1.4" fill="none"/><rect x="237.5" y="402.5" width="8" height="7.5" rx="2" fill="#e2e040" stroke="#4a4a08" stroke-width="1"/><path d="M239 405 H244 M239 407.5 H244" stroke="#b8b820" stroke-width="0.8"/><path d="M442.5 398.5 L447 396.5 L449.5 402.5 L445 404.5 Z" fill="#e4f0f8" stroke="#2c3258" stroke-width="1"/><path d="M441 404 L448 402 L453 404.5 V407 L446 409.5 L441 407.5 Z" fill="#eceef8" stroke="#1c2040" stroke-width="1.1"/><path d="M446 406.5 L453 404.5" stroke="#1c2040" stroke-width="0.9"/><path d="M469.0 402.5 L472.5 406 L480.0 398.5" stroke="#0e5a0e" stroke-width="4" fill="none" stroke-linejoin="miter"/><path d="M469.0 402.5 L472.5 406 L480.0 398.5" stroke="#22cc22" stroke-width="2.2" fill="none"/><path d="M71 425 L79 422 L86 426 L78 429 Z" fill="#b4cff0" stroke="#6c8cb4" stroke-width="0.8"/><path d="M71 427 L78 430.5 L86 427.5" stroke="#6c8cb4" fill="none" stroke-width="0.9"/><circle cx="76.5" cy="420" r="3.8" fill="#f4f4f4" stroke="#555" stroke-width="1.1"/><path d="M76.5 414.5 V416.2 M76.5 423.8 V425.5 M71 420 H72.7 M80.3 420 H82 M72.5 416 L73.8 417.3 M80.5 416 L79.2 417.3 M72.5 424 L73.8 422.7" stroke="#555" stroke-width="1.3"/><path d="M181.5 416 C177.5 416 176.5 419 176.5 420.5 C176.5 422.5 179.0 423.5 179.5 425 H183.5 C184.0 423.5 186.5 422.5 186.5 420.5 C186.5 419 185.5 416 181.5 416 Z" fill="#fffbe0" stroke="#c8b830" stroke-width="1.1"/><rect x="179.5" y="425" width="4" height="3" fill="#4a5aa0"/><rect x="204" y="415" width="13" height="13" fill="#e0f060" opacity="0.55"/><circle cx="210.5" cy="421.5" r="6" fill="#f2dc50" stroke="#2c4c6a" stroke-width="1.1"/><path d="M234 423.5 V419.5 C234 416 240.5 416 240.5 419.5 V421" stroke="#4a4a08" stroke-width="3.2" fill="none"/><path d="M234 423.5 V419.5 C234 416 240.5 416 240.5 419.5 V421" stroke="#f4f070" stroke-width="1.4" fill="none"/><rect x="237.5" y="421.5" width="8" height="7.5" rx="2" fill="#e2e040" stroke="#4a4a08" stroke-width="1"/><path d="M239 424 H244 M239 426.5 H244" stroke="#b8b820" stroke-width="0.8"/><path d="M442.5 417.5 L447 415.5 L449.5 421.5 L445 423.5 Z" fill="#e4f0f8" stroke="#2c3258" stroke-width="1"/><path d="M441 423 L448 421 L453 423.5 V426 L446 428.5 L441 426.5 Z" fill="#eceef8" stroke="#1c2040" stroke-width="1.1"/><path d="M446 425.5 L453 423.5" stroke="#1c2040" stroke-width="0.9"/><path d="M469.0 421.5 L472.5 425 L480.0 417.5" stroke="#0e5a0e" stroke-width="4" fill="none" stroke-linejoin="miter"/><path d="M469.0 421.5 L472.5 425 L480.0 417.5" stroke="#22cc22" stroke-width="2.2" fill="none"/><path d="M71 444 L79 441 L86 445 L78 448 Z" fill="#b4cff0" stroke="#6c8cb4" stroke-width="0.8"/><path d="M71 446 L78 449.5 L86 446.5" stroke="#6c8cb4" fill="none" stroke-width="0.9"/><circle cx="76.5" cy="439" r="3.8" fill="#f4f4f4" stroke="#555" stroke-width="1.1"/><path d="M76.5 433.5 V435.2 M76.5 442.8 V444.5 M71 439 H72.7 M80.3 439 H82 M72.5 435 L73.8 436.3 M80.5 435 L79.2 436.3 M72.5 443 L73.8 441.7" stroke="#555" stroke-width="1.3"/><path d="M181.5 435 C177.5 435 176.5 438 176.5 439.5 C176.5 441.5 179.0 442.5 179.5 444 H183.5 C184.0 442.5 186.5 441.5 186.5 439.5 C186.5 438 185.5 435 181.5 435 Z" fill="#fffbe0" stroke="#c8b830" stroke-width="1.1"/><rect x="179.5" y="444" width="4" height="3" fill="#4a5aa0"/><rect x="204" y="434" width="13" height="13" fill="#e0f060" opacity="0.55"/><circle cx="210.5" cy="440.5" r="6" fill="#f2dc50" stroke="#2c4c6a" stroke-width="1.1"/><path d="M234 442.5 V438.5 C234 435 240.5 435 240.5 438.5 V440" stroke="#4a4a08" stroke-width="3.2" fill="none"/><path d="M234 442.5 V438.5 C234 435 240.5 435 240.5 438.5 V440" stroke="#f4f070" stroke-width="1.4" fill="none"/><rect x="237.5" y="440.5" width="8" height="7.5" rx="2" fill="#e2e040" stroke="#4a4a08" stroke-width="1"/><path d="M239 443 H244 M239 445.5 H244" stroke="#b8b820" stroke-width="0.8"/><path d="M442.5 436.5 L447 434.5 L449.5 440.5 L445 442.5 Z" fill="#e4f0f8" stroke="#2c3258" stroke-width="1"/><path d="M441 442 L448 440 L453 442.5 V445 L446 447.5 L441 445.5 Z" fill="#eceef8" stroke="#1c2040" stroke-width="1.1"/><path d="M446 444.5 L453 442.5" stroke="#1c2040" stroke-width="0.9"/><path d="M469.0 440.5 L472.5 444 L480.0 436.5" stroke="#0e5a0e" stroke-width="4" fill="none" stroke-linejoin="miter"/><path d="M469.0 440.5 L472.5 444 L480.0 436.5" stroke="#22cc22" stroke-width="2.2" fill="none"/><path d="M71 463 L79 460 L86 464 L78 467 Z" fill="#b4cff0" stroke="#6c8cb4" stroke-width="0.8"/><path d="M71 465 L78 468.5 L86 465.5" stroke="#6c8cb4" fill="none" stroke-width="0.9"/><circle cx="76.5" cy="458" r="3.8" fill="#f4f4f4" stroke="#555" stroke-width="1.1"/><path d="M76.5 452.5 V454.2 M76.5 461.8 V463.5 M71 458 H72.7 M80.3 458 H82 M72.5 454 L73.8 455.3 M80.5 454 L79.2 455.3 M72.5 462 L73.8 460.7" stroke="#555" stroke-width="1.3"/><path d="M181.5 454 C177.5 454 176.5 457 176.5 458.5 C176.5 460.5 179.0 461.5 179.5 463 H183.5 C184.0 461.5 186.5 460.5 186.5 458.5 C186.5 457 185.5 454 181.5 454 Z" fill="#b0cce8" stroke="#5a7090" stroke-width="1"/><rect x="179.5" y="463" width="4" height="3" fill="#2a3040"/><rect x="204" y="453" width="13" height="13" fill="#e0f060" opacity="0.55"/><circle cx="210.5" cy="459.5" r="6" fill="#f2dc50" stroke="#2c4c6a" stroke-width="1.1"/><path d="M234 461.5 V457.5 C234 454 240.5 454 240.5 457.5 V459" stroke="#4a4a08" stroke-width="3.2" fill="none"/><path d="M234 461.5 V457.5 C234 454 240.5 454 240.5 457.5 V459" stroke="#f4f070" stroke-width="1.4" fill="none"/><rect x="237.5" y="459.5" width="8" height="7.5" rx="2" fill="#e2e040" stroke="#4a4a08" stroke-width="1"/><path d="M239 462 H244 M239 464.5 H244" stroke="#b8b820" stroke-width="0.8"/><path d="M442.5 455.5 L447 453.5 L449.5 459.5 L445 461.5 Z" fill="#e4f0f8" stroke="#2c3258" stroke-width="1"/><path d="M441 461 L448 459 L453 461.5 V464 L446 466.5 L441 464.5 Z" fill="#eceef8" stroke="#1c2040" stroke-width="1.1"/><path d="M446 463.5 L453 461.5" stroke="#1c2040" stroke-width="0.9"/><path d="M469.0 459.5 L472.5 463 L480.0 455.5" stroke="#0e5a0e" stroke-width="4" fill="none" stroke-linejoin="miter"/><path d="M469.0 459.5 L472.5 463 L480.0 455.5" stroke="#22cc22" stroke-width="2.2" fill="none"/><path d="M71 482 L79 479 L86 483 L78 486 Z" fill="#b4cff0" stroke="#6c8cb4" stroke-width="0.8"/><path d="M71 484 L78 487.5 L86 484.5" stroke="#6c8cb4" fill="none" stroke-width="0.9"/><circle cx="76.5" cy="477" r="3.8" fill="#f4f4f4" stroke="#555" stroke-width="1.1"/><path d="M76.5 471.5 V473.2 M76.5 480.8 V482.5 M71 477 H72.7 M80.3 477 H82 M72.5 473 L73.8 474.3 M80.5 473 L79.2 474.3 M72.5 481 L73.8 479.7" stroke="#555" stroke-width="1.3"/><path d="M181.5 473 C177.5 473 176.5 476 176.5 477.5 C176.5 479.5 179.0 480.5 179.5 482 H183.5 C184.0 480.5 186.5 479.5 186.5 477.5 C186.5 476 185.5 473 181.5 473 Z" fill="#fffbe0" stroke="#c8b830" stroke-width="1.1"/><rect x="179.5" y="482" width="4" height="3" fill="#4a5aa0"/><rect x="204" y="472" width="13" height="13" fill="#e0f060" opacity="0.55"/><circle cx="210.5" cy="478.5" r="6" fill="#f2dc50" stroke="#2c4c6a" stroke-width="1.1"/><path d="M234 480.5 V476.5 C234 473 240.5 473 240.5 476.5 V478" stroke="#4a4a08" stroke-width="3.2" fill="none"/><path d="M234 480.5 V476.5 C234 473 240.5 473 240.5 476.5 V478" stroke="#f4f070" stroke-width="1.4" fill="none"/><rect x="237.5" y="478.5" width="8" height="7.5" rx="2" fill="#e2e040" stroke="#4a4a08" stroke-width="1"/><path d="M239 481 H244 M239 483.5 H244" stroke="#b8b820" stroke-width="0.8"/><path d="M442.5 474.5 L447 472.5 L449.5 478.5 L445 480.5 Z" fill="#e4f0f8" stroke="#2c3258" stroke-width="1"/><path d="M441 480 L448 478 L453 480.5 V483 L446 485.5 L441 483.5 Z" fill="#eceef8" stroke="#1c2040" stroke-width="1.1"/><path d="M446 482.5 L453 480.5" stroke="#1c2040" stroke-width="0.9"/><path d="M469.0 478.5 L472.5 482 L480.0 474.5" stroke="#0e5a0e" stroke-width="4" fill="none" stroke-linejoin="miter"/><path d="M469.0 478.5 L472.5 482 L480.0 474.5" stroke="#22cc22" stroke-width="2.2" fill="none"/><path d="M71 501 L79 498 L86 502 L78 505 Z" fill="#b4cff0" stroke="#6c8cb4" stroke-width="0.8"/><path d="M71 503 L78 506.5 L86 503.5" stroke="#6c8cb4" fill="none" stroke-width="0.9"/><circle cx="76.5" cy="496" r="3.8" fill="#f4f4f4" stroke="#555" stroke-width="1.1"/><path d="M76.5 490.5 V492.2 M76.5 499.8 V501.5 M71 496 H72.7 M80.3 496 H82 M72.5 492 L73.8 493.3 M80.5 492 L79.2 493.3 M72.5 500 L73.8 498.7" stroke="#555" stroke-width="1.3"/><path d="M181.5 492 C177.5 492 176.5 495 176.5 496.5 C176.5 498.5 179.0 499.5 179.5 501 H183.5 C184.0 499.5 186.5 498.5 186.5 496.5 C186.5 495 185.5 492 181.5 492 Z" fill="#fffbe0" stroke="#c8b830" stroke-width="1.1"/><rect x="179.5" y="501" width="4" height="3" fill="#4a5aa0"/><rect x="204" y="491" width="13" height="13" fill="#e0f060" opacity="0.55"/><circle cx="210.5" cy="497.5" r="6" fill="#f2dc50" stroke="#2c4c6a" stroke-width="1.1"/><path d="M234 499.5 V495.5 C234 492 240.5 492 240.5 495.5 V497" stroke="#4a4a08" stroke-width="3.2" fill="none"/><path d="M234 499.5 V495.5 C234 492 240.5 492 240.5 495.5 V497" stroke="#f4f070" stroke-width="1.4" fill="none"/><rect x="237.5" y="497.5" width="8" height="7.5" rx="2" fill="#e2e040" stroke="#4a4a08" stroke-width="1"/><path d="M239 500 H244 M239 502.5 H244" stroke="#b8b820" stroke-width="0.8"/><path d="M442.5 493.5 L447 491.5 L449.5 497.5 L445 499.5 Z" fill="#e4f0f8" stroke="#2c3258" stroke-width="1"/><path d="M441 499 L448 497 L453 499.5 V502 L446 504.5 L441 502.5 Z" fill="#eceef8" stroke="#1c2040" stroke-width="1.1"/><path d="M446 501.5 L453 499.5" stroke="#1c2040" stroke-width="0.9"/><path d="M469.0 497.5 L472.5 501 L480.0 493.5" stroke="#0e5a0e" stroke-width="4" fill="none" stroke-linejoin="miter"/><path d="M469.0 497.5 L472.5 501 L480.0 493.5" stroke="#22cc22" stroke-width="2.2" fill="none"/><path d="M71 520 L79 517 L86 521 L78 524 Z" fill="#b4cff0" stroke="#6c8cb4" stroke-width="0.8"/><path d="M71 522 L78 525.5 L86 522.5" stroke="#6c8cb4" fill="none" stroke-width="0.9"/><circle cx="76.5" cy="515" r="3.8" fill="#f4f4f4" stroke="#555" stroke-width="1.1"/><path d="M76.5 509.5 V511.2 M76.5 518.8 V520.5 M71 515 H72.7 M80.3 515 H82 M72.5 511 L73.8 512.3 M80.5 511 L79.2 512.3 M72.5 519 L73.8 517.7" stroke="#555" stroke-width="1.3"/><path d="M181.5 511 C177.5 511 176.5 514 176.5 515.5 C176.5 517.5 179.0 518.5 179.5 520 H183.5 C184.0 518.5 186.5 517.5 186.5 515.5 C186.5 514 185.5 511 181.5 511 Z" fill="#fffbe0" stroke="#c8b830" stroke-width="1.1"/><rect x="179.5" y="520" width="4" height="3" fill="#4a5aa0"/><rect x="204" y="510" width="13" height="13" fill="#e0f060" opacity="0.55"/><circle cx="210.5" cy="516.5" r="6" fill="#f2dc50" stroke="#2c4c6a" stroke-width="1.1"/><path d="M234 518.5 V514.5 C234 511 240.5 511 240.5 514.5 V516" stroke="#4a4a08" stroke-width="3.2" fill="none"/><path d="M234 518.5 V514.5 C234 511 240.5 511 240.5 514.5 V516" stroke="#f4f070" stroke-width="1.4" fill="none"/><rect x="237.5" y="516.5" width="8" height="7.5" rx="2" fill="#e2e040" stroke="#4a4a08" stroke-width="1"/><path d="M239 519 H244 M239 521.5 H244" stroke="#b8b820" stroke-width="0.8"/><path d="M442.5 512.5 L447 510.5 L449.5 516.5 L445 518.5 Z" fill="#e4f0f8" stroke="#2c3258" stroke-width="1"/><path d="M441 518 L448 516 L453 518.5 V521 L446 523.5 L441 521.5 Z" fill="#eceef8" stroke="#1c2040" stroke-width="1.1"/><path d="M446 520.5 L453 518.5" stroke="#1c2040" stroke-width="0.9"/><path d="M469.0 516.5 L472.5 520 L480.0 512.5" stroke="#0e5a0e" stroke-width="4" fill="none" stroke-linejoin="miter"/><path d="M469.0 516.5 L472.5 520 L480.0 512.5" stroke="#22cc22" stroke-width="2.2" fill="none"/><path d="M71 539 L79 536 L86 540 L78 543 Z" fill="#b4cff0" stroke="#6c8cb4" stroke-width="0.8"/><path d="M71 541 L78 544.5 L86 541.5" stroke="#6c8cb4" fill="none" stroke-width="0.9"/><circle cx="76.5" cy="534" r="3.8" fill="#f4f4f4" stroke="#555" stroke-width="1.1"/><path d="M76.5 528.5 V530.2 M76.5 537.8 V539.5 M71 534 H72.7 M80.3 534 H82 M72.5 530 L73.8 531.3 M80.5 530 L79.2 531.3 M72.5 538 L73.8 536.7" stroke="#555" stroke-width="1.3"/><path d="M181.5 530 C177.5 530 176.5 533 176.5 534.5 C176.5 536.5 179.0 537.5 179.5 539 H183.5 C184.0 537.5 186.5 536.5 186.5 534.5 C186.5 533 185.5 530 181.5 530 Z" fill="#fffbe0" stroke="#c8b830" stroke-width="1.1"/><rect x="179.5" y="539" width="4" height="3" fill="#4a5aa0"/><rect x="204" y="529" width="13" height="13" fill="#e0f060" opacity="0.55"/><circle cx="210.5" cy="535.5" r="6" fill="#f2dc50" stroke="#2c4c6a" stroke-width="1.1"/><path d="M234 537.5 V533.5 C234 530 240.5 530 240.5 533.5 V535" stroke="#4a4a08" stroke-width="3.2" fill="none"/><path d="M234 537.5 V533.5 C234 530 240.5 530 240.5 533.5 V535" stroke="#f4f070" stroke-width="1.4" fill="none"/><rect x="237.5" y="535.5" width="8" height="7.5" rx="2" fill="#e2e040" stroke="#4a4a08" stroke-width="1"/><path d="M239 538 H244 M239 540.5 H244" stroke="#b8b820" stroke-width="0.8"/><path d="M442.5 531.5 L447 529.5 L449.5 535.5 L445 537.5 Z" fill="#e4f0f8" stroke="#2c3258" stroke-width="1"/><path d="M441 537 L448 535 L453 537.5 V540 L446 542.5 L441 540.5 Z" fill="#eceef8" stroke="#1c2040" stroke-width="1.1"/><path d="M446 539.5 L453 537.5" stroke="#1c2040" stroke-width="0.9"/><path d="M469.0 535.5 L472.5 539 L480.0 531.5" stroke="#0e5a0e" stroke-width="4" fill="none" stroke-linejoin="miter"/><path d="M469.0 535.5 L472.5 539 L480.0 531.5" stroke="#22cc22" stroke-width="2.2" fill="none"/><path d="M71 558 L79 555 L86 559 L78 562 Z" fill="#b4cff0" stroke="#6c8cb4" stroke-width="0.8"/><path d="M71 560 L78 563.5 L86 560.5" stroke="#6c8cb4" fill="none" stroke-width="0.9"/><circle cx="76.5" cy="553" r="3.8" fill="#f4f4f4" stroke="#555" stroke-width="1.1"/><path d="M76.5 547.5 V549.2 M76.5 556.8 V558.5 M71 553 H72.7 M80.3 553 H82 M72.5 549 L73.8 550.3 M80.5 549 L79.2 550.3 M72.5 557 L73.8 555.7" stroke="#555" stroke-width="1.3"/><path d="M181.5 549 C177.5 549 176.5 552 176.5 553.5 C176.5 555.5 179.0 556.5 179.5 558 H183.5 C184.0 556.5 186.5 555.5 186.5 553.5 C186.5 552 185.5 549 181.5 549 Z" fill="#fffbe0" stroke="#c8b830" stroke-width="1.1"/><rect x="179.5" y="558" width="4" height="3" fill="#4a5aa0"/><rect x="204" y="548" width="13" height="13" fill="#e0f060" opacity="0.55"/><circle cx="210.5" cy="554.5" r="6" fill="#f2dc50" stroke="#2c4c6a" stroke-width="1.1"/><path d="M234 556.5 V552.5 C234 549 240.5 549 240.5 552.5 V554" stroke="#4a4a08" stroke-width="3.2" fill="none"/><path d="M234 556.5 V552.5 C234 549 240.5 549 240.5 552.5 V554" stroke="#f4f070" stroke-width="1.4" fill="none"/><rect x="237.5" y="554.5" width="8" height="7.5" rx="2" fill="#e2e040" stroke="#4a4a08" stroke-width="1"/><path d="M239 557 H244 M239 559.5 H244" stroke="#b8b820" stroke-width="0.8"/><path d="M442.5 550.5 L447 548.5 L449.5 554.5 L445 556.5 Z" fill="#e4f0f8" stroke="#2c3258" stroke-width="1"/><path d="M441 556 L448 554 L453 556.5 V559 L446 561.5 L441 559.5 Z" fill="#eceef8" stroke="#1c2040" stroke-width="1.1"/><path d="M446 558.5 L453 556.5" stroke="#1c2040" stroke-width="0.9"/><path d="M469.0 554.5 L472.5 558 L480.0 550.5" stroke="#0e5a0e" stroke-width="4" fill="none" stroke-linejoin="miter"/><path d="M469.0 554.5 L472.5 558 L480.0 550.5" stroke="#22cc22" stroke-width="2.2" fill="none"/><path d="M71 577 L79 574 L86 578 L78 581 Z" fill="#b4cff0" stroke="#6c8cb4" stroke-width="0.8"/><path d="M71 579 L78 582.5 L86 579.5" stroke="#6c8cb4" fill="none" stroke-width="0.9"/><circle cx="76.5" cy="572" r="3.8" fill="#f4f4f4" stroke="#555" stroke-width="1.1"/><path d="M76.5 566.5 V568.2 M76.5 575.8 V577.5 M71 572 H72.7 M80.3 572 H82 M72.5 568 L73.8 569.3 M80.5 568 L79.2 569.3 M72.5 576 L73.8 574.7" stroke="#555" stroke-width="1.3"/><path d="M181.5 568 C177.5 568 176.5 571 176.5 572.5 C176.5 574.5 179.0 575.5 179.5 577 H183.5 C184.0 575.5 186.5 574.5 186.5 572.5 C186.5 571 185.5 568 181.5 568 Z" fill="#fffbe0" stroke="#c8b830" stroke-width="1.1"/><rect x="179.5" y="577" width="4" height="3" fill="#4a5aa0"/><rect x="204" y="567" width="13" height="13" fill="#e0f060" opacity="0.55"/><circle cx="210.5" cy="573.5" r="6" fill="#f2dc50" stroke="#2c4c6a" stroke-width="1.1"/><path d="M234 575.5 V571.5 C234 568 240.5 568 240.5 571.5 V573" stroke="#4a4a08" stroke-width="3.2" fill="none"/><path d="M234 575.5 V571.5 C234 568 240.5 568 240.5 571.5 V573" stroke="#f4f070" stroke-width="1.4" fill="none"/><rect x="237.5" y="573.5" width="8" height="7.5" rx="2" fill="#e2e040" stroke="#4a4a08" stroke-width="1"/><path d="M239 576 H244 M239 578.5 H244" stroke="#b8b820" stroke-width="0.8"/><path d="M442.5 569.5 L447 567.5 L449.5 573.5 L445 575.5 Z" fill="#e4f0f8" stroke="#2c3258" stroke-width="1"/><path d="M441 575 L448 573 L453 575.5 V578 L446 580.5 L441 578.5 Z" fill="#eceef8" stroke="#1c2040" stroke-width="1.1"/><path d="M446 577.5 L453 575.5" stroke="#1c2040" stroke-width="0.9"/><path d="M469.0 573.5 L472.5 577 L480.0 569.5" stroke="#0e5a0e" stroke-width="4" fill="none" stroke-linejoin="miter"/><path d="M469.0 573.5 L472.5 577 L480.0 569.5" stroke="#22cc22" stroke-width="2.2" fill="none"/><path d="M71 596 L79 593 L86 597 L78 600 Z" fill="#b4cff0" stroke="#6c8cb4" stroke-width="0.8"/><path d="M71 598 L78 601.5 L86 598.5" stroke="#6c8cb4" fill="none" stroke-width="0.9"/><circle cx="76.5" cy="591" r="3.8" fill="#f4f4f4" stroke="#555" stroke-width="1.1"/><path d="M76.5 585.5 V587.2 M76.5 594.8 V596.5 M71 591 H72.7 M80.3 591 H82 M72.5 587 L73.8 588.3 M80.5 587 L79.2 588.3 M72.5 595 L73.8 593.7" stroke="#555" stroke-width="1.3"/><path d="M73 600 L85 593" stroke="#d03030" stroke-width="1.1"/><path d="M181.5 587 C177.5 587 176.5 590 176.5 591.5 C176.5 593.5 179.0 594.5 179.5 596 H183.5 C184.0 594.5 186.5 593.5 186.5 591.5 C186.5 590 185.5 587 181.5 587 Z" fill="#fffbe0" stroke="#c8b830" stroke-width="1.1"/><rect x="179.5" y="596" width="4" height="3" fill="#4a5aa0"/><rect x="204" y="586" width="13" height="13" fill="#e0f060" opacity="0.55"/><circle cx="210.5" cy="592.5" r="6" fill="#f2dc50" stroke="#2c4c6a" stroke-width="1.1"/><path d="M234 594.5 V590.5 C234 587 240.5 587 240.5 590.5 V592" stroke="#4a4a08" stroke-width="3.2" fill="none"/><path d="M234 594.5 V590.5 C234 587 240.5 587 240.5 590.5 V592" stroke="#f4f070" stroke-width="1.4" fill="none"/><rect x="237.5" y="592.5" width="8" height="7.5" rx="2" fill="#e2e040" stroke="#4a4a08" stroke-width="1"/><path d="M239 595 H244 M239 597.5 H244" stroke="#b8b820" stroke-width="0.8"/><path d="M442.5 588.5 L447 586.5 L449.5 592.5 L445 594.5 Z" fill="#e4f0f8" stroke="#2c3258" stroke-width="1"/><path d="M441 594 L448 592 L453 594.5 V597 L446 599.5 L441 597.5 Z" fill="#eceef8" stroke="#1c2040" stroke-width="1.1"/><path d="M446 596.5 L453 594.5" stroke="#1c2040" stroke-width="0.9"/><path d="M72.5 611.5 L76 615 L83.5 607.5" stroke="#0e5a0e" stroke-width="4" fill="none" stroke-linejoin="miter"/><path d="M72.5 611.5 L76 615 L83.5 607.5" stroke="#22cc22" stroke-width="2.2" fill="none"/><path d="M181.5 606 C177.5 606 176.5 609 176.5 610.5 C176.5 612.5 179.0 613.5 179.5 615 H183.5 C184.0 613.5 186.5 612.5 186.5 610.5 C186.5 609 185.5 606 181.5 606 Z" fill="#fffbe0" stroke="#c8b830" stroke-width="1.1"/><rect x="179.5" y="615" width="4" height="3" fill="#4a5aa0"/><rect x="204" y="605" width="13" height="13" fill="#e0f060" opacity="0.55"/><circle cx="210.5" cy="611.5" r="6" fill="#f2dc50" stroke="#2c4c6a" stroke-width="1.1"/><path d="M234 613.5 V609.5 C234 606 240.5 606 240.5 609.5 V611" stroke="#4a4a08" stroke-width="3.2" fill="none"/><path d="M234 613.5 V609.5 C234 606 240.5 606 240.5 609.5 V611" stroke="#f4f070" stroke-width="1.4" fill="none"/><rect x="237.5" y="611.5" width="8" height="7.5" rx="2" fill="#e2e040" stroke="#4a4a08" stroke-width="1"/><path d="M239 614 H244 M239 616.5 H244" stroke="#b8b820" stroke-width="0.8"/><path d="M442.5 607.5 L447 605.5 L449.5 611.5 L445 613.5 Z" fill="#e4f0f8" stroke="#2c3258" stroke-width="1"/><path d="M441 613 L448 611 L453 613.5 V616 L446 618.5 L441 616.5 Z" fill="#eceef8" stroke="#1c2040" stroke-width="1.1"/><path d="M446 615.5 L453 613.5" stroke="#1c2040" stroke-width="0.9"/><path d="M71 631 L77 628 L86 632 L80 635 Z" fill="#b8cce4" stroke="#8aa0bc" stroke-width="0.7"/><path d="M71 631.5 L80 635.5 L86 632.5" stroke="#3a4a68" fill="none" stroke-width="1.2"/><path d="M181.5 625 C177.5 625 176.5 628 176.5 629.5 C176.5 631.5 179.0 632.5 179.5 634 H183.5 C184.0 632.5 186.5 631.5 186.5 629.5 C186.5 628 185.5 625 181.5 625 Z" fill="#fffbe0" stroke="#c8b830" stroke-width="1.1"/><rect x="179.5" y="634" width="4" height="3" fill="#4a5aa0"/><rect x="204" y="624" width="13" height="13" fill="#e0f060" opacity="0.55"/><circle cx="210.5" cy="630.5" r="6" fill="#f2dc50" stroke="#2c4c6a" stroke-width="1.1"/><path d="M234 632.5 V628.5 C234 625 240.5 625 240.5 628.5 V630" stroke="#4a4a08" stroke-width="3.2" fill="none"/><path d="M234 632.5 V628.5 C234 625 240.5 625 240.5 628.5 V630" stroke="#f4f070" stroke-width="1.4" fill="none"/><rect x="237.5" y="630.5" width="8" height="7.5" rx="2" fill="#e2e040" stroke="#4a4a08" stroke-width="1"/><path d="M239 633 H244 M239 635.5 H244" stroke="#b8b820" stroke-width="0.8"/><path d="M442.5 626.5 L447 624.5 L449.5 630.5 L445 632.5 Z" fill="#e4f0f8" stroke="#2c3258" stroke-width="1"/><path d="M441 632 L448 630 L453 632.5 V635 L446 637.5 L441 635.5 Z" fill="#eceef8" stroke="#1c2040" stroke-width="1.1"/><path d="M446 634.5 L453 632.5" stroke="#1c2040" stroke-width="0.9"/><path d="M71 650 L77 647 L86 651 L80 654 Z" fill="#b8cce4" stroke="#8aa0bc" stroke-width="0.7"/><path d="M71 650.5 L80 654.5 L86 651.5" stroke="#3a4a68" fill="none" stroke-width="1.2"/><path d="M181.5 644 C177.5 644 176.5 647 176.5 648.5 C176.5 650.5 179.0 651.5 179.5 653 H183.5 C184.0 651.5 186.5 650.5 186.5 648.5 C186.5 647 185.5 644 181.5 644 Z" fill="#fffbe0" stroke="#c8b830" stroke-width="1.1"/><rect x="179.5" y="653" width="4" height="3" fill="#4a5aa0"/><rect x="204" y="643" width="13" height="13" fill="#e0f060" opacity="0.55"/><circle cx="210.5" cy="649.5" r="6" fill="#f2dc50" stroke="#2c4c6a" stroke-width="1.1"/><path d="M234 651.5 V647.5 C234 644 240.5 644 240.5 647.5 V649" stroke="#4a4a08" stroke-width="3.2" fill="none"/><path d="M234 651.5 V647.5 C234 644 240.5 644 240.5 647.5 V649" stroke="#f4f070" stroke-width="1.4" fill="none"/><rect x="237.5" y="649.5" width="8" height="7.5" rx="2" fill="#e2e040" stroke="#4a4a08" stroke-width="1"/><path d="M239 652 H244 M239 654.5 H244" stroke="#b8b820" stroke-width="0.8"/><path d="M442.5 645.5 L447 643.5 L449.5 649.5 L445 651.5 Z" fill="#e4f0f8" stroke="#2c3258" stroke-width="1"/><path d="M441 651 L448 649 L453 651.5 V654 L446 656.5 L441 654.5 Z" fill="#eceef8" stroke="#1c2040" stroke-width="1.1"/><path d="M446 653.5 L453 651.5" stroke="#1c2040" stroke-width="0.9"/><path d="M71 669 L77 666 L86 670 L80 673 Z" fill="#b8cce4" stroke="#8aa0bc" stroke-width="0.7"/><path d="M71 669.5 L80 673.5 L86 670.5" stroke="#3a4a68" fill="none" stroke-width="1.2"/><path d="M181.5 663 C177.5 663 176.5 666 176.5 667.5 C176.5 669.5 179.0 670.5 179.5 672 H183.5 C184.0 670.5 186.5 669.5 186.5 667.5 C186.5 666 185.5 663 181.5 663 Z" fill="#fffbe0" stroke="#c8b830" stroke-width="1.1"/><rect x="179.5" y="672" width="4" height="3" fill="#4a5aa0"/><rect x="204" y="662" width="13" height="13" fill="#e0f060" opacity="0.55"/><circle cx="210.5" cy="668.5" r="6" fill="#f2dc50" stroke="#2c4c6a" stroke-width="1.1"/><path d="M234 670.5 V666.5 C234 663 240.5 663 240.5 666.5 V668" stroke="#4a4a08" stroke-width="3.2" fill="none"/><path d="M234 670.5 V666.5 C234 663 240.5 663 240.5 666.5 V668" stroke="#f4f070" stroke-width="1.4" fill="none"/><rect x="237.5" y="668.5" width="8" height="7.5" rx="2" fill="#e2e040" stroke="#4a4a08" stroke-width="1"/><path d="M239 671 H244 M239 673.5 H244" stroke="#b8b820" stroke-width="0.8"/><path d="M442.5 664.5 L447 662.5 L449.5 668.5 L445 670.5 Z" fill="#e4f0f8" stroke="#2c3258" stroke-width="1"/><path d="M441 670 L448 668 L453 670.5 V673 L446 675.5 L441 673.5 Z" fill="#eceef8" stroke="#1c2040" stroke-width="1.1"/><path d="M446 672.5 L453 670.5" stroke="#1c2040" stroke-width="0.9"/><path d="M71 688 L77 685 L86 689 L80 692 Z" fill="#b8cce4" stroke="#8aa0bc" stroke-width="0.7"/><path d="M71 688.5 L80 692.5 L86 689.5" stroke="#3a4a68" fill="none" stroke-width="1.2"/><path d="M181.5 682 C177.5 682 176.5 685 176.5 686.5 C176.5 688.5 179.0 689.5 179.5 691 H183.5 C184.0 689.5 186.5 688.5 186.5 686.5 C186.5 685 185.5 682 181.5 682 Z" fill="#fffbe0" stroke="#c8b830" stroke-width="1.1"/><rect x="179.5" y="691" width="4" height="3" fill="#4a5aa0"/><rect x="204" y="681" width="13" height="13" fill="#e0f060" opacity="0.55"/><circle cx="210.5" cy="687.5" r="6" fill="#f2dc50" stroke="#2c4c6a" stroke-width="1.1"/><path d="M234 689.5 V685.5 C234 682 240.5 682 240.5 685.5 V687" stroke="#4a4a08" stroke-width="3.2" fill="none"/><path d="M234 689.5 V685.5 C234 682 240.5 682 240.5 685.5 V687" stroke="#f4f070" stroke-width="1.4" fill="none"/><rect x="237.5" y="687.5" width="8" height="7.5" rx="2" fill="#e2e040" stroke="#4a4a08" stroke-width="1"/><path d="M239 690 H244 M239 692.5 H244" stroke="#b8b820" stroke-width="0.8"/><path d="M442.5 683.5 L447 681.5 L449.5 687.5 L445 689.5 Z" fill="#e4f0f8" stroke="#2c3258" stroke-width="1"/><path d="M441 689 L448 687 L453 689.5 V692 L446 694.5 L441 692.5 Z" fill="#eceef8" stroke="#1c2040" stroke-width="1.1"/><path d="M446 691.5 L453 689.5" stroke="#1c2040" stroke-width="0.9"/><path d="M71 707 L77 704 L86 708 L80 711 Z" fill="#b8cce4" stroke="#8aa0bc" stroke-width="0.7"/><path d="M71 707.5 L80 711.5 L86 708.5" stroke="#3a4a68" fill="none" stroke-width="1.2"/><path d="M181.5 701 C177.5 701 176.5 704 176.5 705.5 C176.5 707.5 179.0 708.5 179.5 710 H183.5 C184.0 708.5 186.5 707.5 186.5 705.5 C186.5 704 185.5 701 181.5 701 Z" fill="#fffbe0" stroke="#c8b830" stroke-width="1.1"/><rect x="179.5" y="710" width="4" height="3" fill="#4a5aa0"/><rect x="204" y="700" width="13" height="13" fill="#e0f060" opacity="0.55"/><circle cx="210.5" cy="706.5" r="6" fill="#f2dc50" stroke="#2c4c6a" stroke-width="1.1"/><path d="M234 708.5 V704.5 C234 701 240.5 701 240.5 704.5 V706" stroke="#4a4a08" stroke-width="3.2" fill="none"/><path d="M234 708.5 V704.5 C234 701 240.5 701 240.5 704.5 V706" stroke="#f4f070" stroke-width="1.4" fill="none"/><rect x="237.5" y="706.5" width="8" height="7.5" rx="2" fill="#e2e040" stroke="#4a4a08" stroke-width="1"/><path d="M239 709 H244 M239 711.5 H244" stroke="#b8b820" stroke-width="0.8"/><path d="M442.5 702.5 L447 700.5 L449.5 706.5 L445 708.5 Z" fill="#e4f0f8" stroke="#2c3258" stroke-width="1"/><path d="M441 708 L448 706 L453 708.5 V711 L446 713.5 L441 711.5 Z" fill="#eceef8" stroke="#1c2040" stroke-width="1.1"/><path d="M446 710.5 L453 708.5" stroke="#1c2040" stroke-width="0.9"/><path d="M71 726 L77 723 L86 727 L80 730 Z" fill="#b8cce4" stroke="#8aa0bc" stroke-width="0.7"/><path d="M71 726.5 L80 730.5 L86 727.5" stroke="#3a4a68" fill="none" stroke-width="1.2"/><path d="M181.5 720 C177.5 720 176.5 723 176.5 724.5 C176.5 726.5 179.0 727.5 179.5 729 H183.5 C184.0 727.5 186.5 726.5 186.5 724.5 C186.5 723 185.5 720 181.5 720 Z" fill="#fffbe0" stroke="#c8b830" stroke-width="1.1"/><rect x="179.5" y="729" width="4" height="3" fill="#4a5aa0"/><rect x="204" y="719" width="13" height="13" fill="#e0f060" opacity="0.55"/><circle cx="210.5" cy="725.5" r="6" fill="#f2dc50" stroke="#2c4c6a" stroke-width="1.1"/><path d="M234 727.5 V723.5 C234 720 240.5 720 240.5 723.5 V725" stroke="#4a4a08" stroke-width="3.2" fill="none"/><path d="M234 727.5 V723.5 C234 720 240.5 720 240.5 723.5 V725" stroke="#f4f070" stroke-width="1.4" fill="none"/><rect x="237.5" y="725.5" width="8" height="7.5" rx="2" fill="#e2e040" stroke="#4a4a08" stroke-width="1"/><path d="M239 728 H244 M239 730.5 H244" stroke="#b8b820" stroke-width="0.8"/><path d="M442.5 721.5 L447 719.5 L449.5 725.5 L445 727.5 Z" fill="#e4f0f8" stroke="#2c3258" stroke-width="1"/><path d="M441 727 L448 725 L453 727.5 V730 L446 732.5 L441 730.5 Z" fill="#eceef8" stroke="#1c2040" stroke-width="1.1"/><path d="M446 729.5 L453 727.5" stroke="#1c2040" stroke-width="0.9"/><path d="M71 745 L77 742 L86 746 L80 749 Z" fill="#b8cce4" stroke="#8aa0bc" stroke-width="0.7"/><path d="M71 745.5 L80 749.5 L86 746.5" stroke="#3a4a68" fill="none" stroke-width="1.2"/><path d="M181.5 739 C177.5 739 176.5 742 176.5 743.5 C176.5 745.5 179.0 746.5 179.5 748 H183.5 C184.0 746.5 186.5 745.5 186.5 743.5 C186.5 742 185.5 739 181.5 739 Z" fill="#fffbe0" stroke="#c8b830" stroke-width="1.1"/><rect x="179.5" y="748" width="4" height="3" fill="#4a5aa0"/><rect x="204" y="738" width="13" height="13" fill="#e0f060" opacity="0.55"/><circle cx="210.5" cy="744.5" r="6" fill="#f2dc50" stroke="#2c4c6a" stroke-width="1.1"/><path d="M234 746.5 V742.5 C234 739 240.5 739 240.5 742.5 V744" stroke="#4a4a08" stroke-width="3.2" fill="none"/><path d="M234 746.5 V742.5 C234 739 240.5 739 240.5 742.5 V744" stroke="#f4f070" stroke-width="1.4" fill="none"/><rect x="237.5" y="744.5" width="8" height="7.5" rx="2" fill="#e2e040" stroke="#4a4a08" stroke-width="1"/><path d="M239 747 H244 M239 749.5 H244" stroke="#b8b820" stroke-width="0.8"/><path d="M442.5 740.5 L447 738.5 L449.5 744.5 L445 746.5 Z" fill="#e4f0f8" stroke="#2c3258" stroke-width="1"/><path d="M441 746 L448 744 L453 746.5 V749 L446 751.5 L441 749.5 Z" fill="#eceef8" stroke="#1c2040" stroke-width="1.1"/><path d="M446 748.5 L453 746.5" stroke="#1c2040" stroke-width="0.9"/></svg>
<div class="btn" style="left:65px;top:767px;width:73px;height:21px;background:#e1e1e1;border-color:#adadad;color:#000;letter-spacing:-0.2px">Import...</div>
<div class="btn" style="left:146px;top:767px;width:133px;height:21px;background:#e1e1e1;border-color:#adadad;color:#000;letter-spacing:-0.2px">Lineweight Mapping...</div>
<div class="btn" style="left:711px;top:767px;width:117px;height:21px;background:#e1e1e1;border-color:#adadad;color:#000;letter-spacing:-0.2px">Restore Defaults</div>
<div class="btn" style="left:512px;top:801px;width:73px;height:21px;background:#e1e1e1;border-color:#adadad;color:#000;letter-spacing:-0.2px">OK</div>
<div class="btn" style="left:593px;top:801px;width:73px;height:21px;background:#e1e1e1;border-color:#adadad;color:#000;letter-spacing:-0.2px">Cancel</div>
<div class="btn" style="left:674px;top:801px;width:73px;height:21px;background:#cccccc;border-color:#bfbfbf;color:#838383;letter-spacing:-0.2px">Apply</div>
<div class="btn" style="left:755px;top:801px;width:73px;height:21px;background:#e1e1e1;border-color:#adadad;color:#000;letter-spacing:-0.2px"><u>H</u>elp</div>
</body></html>
